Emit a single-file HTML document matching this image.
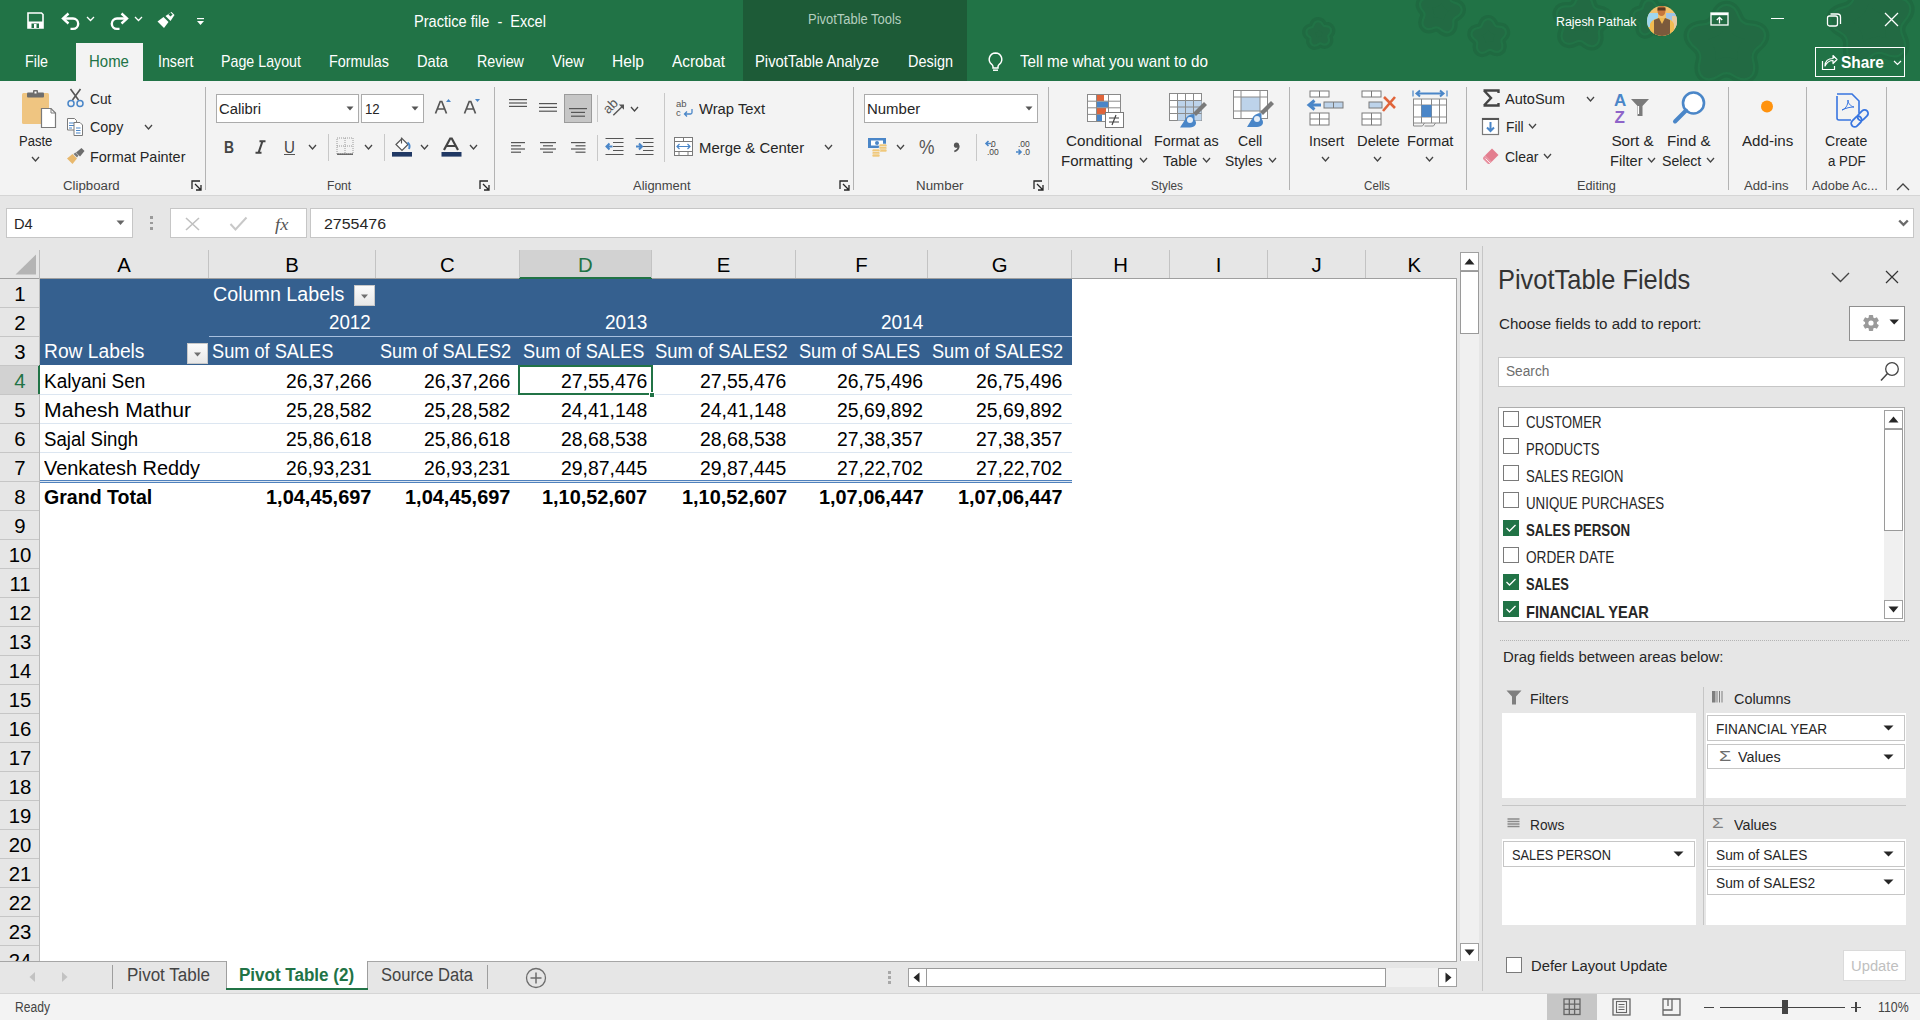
<!DOCTYPE html><html><head><meta charset="utf-8"><style>
html,body{margin:0;padding:0;}
body{width:1920px;height:1020px;position:relative;overflow:hidden;background:#ffffff;font-family:"Liberation Sans",sans-serif;}
.a{position:absolute;}
.t{position:absolute;white-space:pre;line-height:1;transform-origin:0 0;}
svg.a{overflow:visible;}
</style></head><body>
<div class="a" style="left:0px;top:0px;width:1920px;height:81px;background:#217346;"></div>
<div class="a" style="left:743px;top:0px;width:224px;height:81px;background:#1d5b37;"></div>
<svg class="a" style="left:1280px;top:0px;" width="640" height="81" viewBox="0 0 640 81"><clipPath id="ctb"><rect x="0" y="0" width="640" height="81"/></clipPath><g clip-path="url(#ctb)"><path d="M36.9 27.0 Q37.9 23.3 39.6 26.7 Q41.3 30.1 45.0 29.9 Q48.8 29.6 46.1 32.3 Q43.4 34.9 44.8 38.5 Q46.2 42.0 42.8 40.2 Q39.5 38.5 36.6 40.9 Q33.6 43.3 34.3 39.6 Q34.9 35.8 31.7 33.8 Q28.5 31.8 32.2 31.2 Q36.0 30.6 36.9 27.0Z" fill="#1f6a41" stroke="#1f6a41" stroke-width="16.2" stroke-linejoin="round"/><path d="M36.9 27.0 Q37.9 23.3 39.6 26.7 Q41.3 30.1 45.0 29.9 Q48.8 29.6 46.1 32.3 Q43.4 34.9 44.8 38.5 Q46.2 42.0 42.8 40.2 Q39.5 38.5 36.6 40.9 Q33.6 43.3 34.3 39.6 Q34.9 35.8 31.7 33.8 Q28.5 31.8 32.2 31.2 Q36.0 30.6 36.9 27.0Z" fill="#217346" stroke="#217346" stroke-width="9.8" stroke-linejoin="round"/><path d="M36.9 27.0 Q37.9 23.3 39.6 26.7 Q41.3 30.1 45.0 29.9 Q48.8 29.6 46.1 32.3 Q43.4 34.9 44.8 38.5 Q46.2 42.0 42.8 40.2 Q39.5 38.5 36.6 40.9 Q33.6 43.3 34.3 39.6 Q34.9 35.8 31.7 33.8 Q28.5 31.8 32.2 31.2 Q36.0 30.6 36.9 27.0Z" fill="#226a43" stroke="#226a43" stroke-width="5.4" stroke-linejoin="round"/><path d="M159.9 -1.5 Q163.5 -7.6 164.7 -0.7 Q166.0 6.2 172.8 7.7 Q179.7 9.2 173.5 12.6 Q167.4 15.9 168.0 22.9 Q168.7 29.9 163.6 25.0 Q158.6 20.2 152.1 23.0 Q145.7 25.8 148.7 19.5 Q151.7 13.2 147.1 7.9 Q142.4 2.7 149.4 3.6 Q156.3 4.5 159.9 -1.5Z" fill="#1f6a41" stroke="#1f6a41" stroke-width="19.1" stroke-linejoin="round"/><path d="M159.9 -1.5 Q163.5 -7.6 164.7 -0.7 Q166.0 6.2 172.8 7.7 Q179.7 9.2 173.5 12.6 Q167.4 15.9 168.0 22.9 Q168.7 29.9 163.6 25.0 Q158.6 20.2 152.1 23.0 Q145.7 25.8 148.7 19.5 Q151.7 13.2 147.1 7.9 Q142.4 2.7 149.4 3.6 Q156.3 4.5 159.9 -1.5Z" fill="#217346" stroke="#217346" stroke-width="12.7" stroke-linejoin="round"/><path d="M159.9 -1.5 Q163.5 -7.6 164.7 -0.7 Q166.0 6.2 172.8 7.7 Q179.7 9.2 173.5 12.6 Q167.4 15.9 168.0 22.9 Q168.7 29.9 163.6 25.0 Q158.6 20.2 152.1 23.0 Q145.7 25.8 148.7 19.5 Q151.7 13.2 147.1 7.9 Q142.4 2.7 149.4 3.6 Q156.3 4.5 159.9 -1.5Z" fill="#226a43" stroke="#226a43" stroke-width="8.3" stroke-linejoin="round"/><path d="M206.3 26.6 Q207.9 21.2 210.2 26.3 Q212.5 31.4 218.1 31.2 Q223.7 31.1 219.6 34.8 Q215.4 38.6 217.3 43.9 Q219.2 49.1 214.3 46.4 Q209.5 43.6 205.0 47.0 Q200.6 50.4 201.7 45.0 Q202.8 39.5 198.2 36.3 Q193.7 33.2 199.2 32.5 Q204.7 31.9 206.3 26.6Z" fill="#1f6a41" stroke="#1f6a41" stroke-width="17.8" stroke-linejoin="round"/><path d="M206.3 26.6 Q207.9 21.2 210.2 26.3 Q212.5 31.4 218.1 31.2 Q223.7 31.1 219.6 34.8 Q215.4 38.6 217.3 43.9 Q219.2 49.1 214.3 46.4 Q209.5 43.6 205.0 47.0 Q200.6 50.4 201.7 45.0 Q202.8 39.5 198.2 36.3 Q193.7 33.2 199.2 32.5 Q204.7 31.9 206.3 26.6Z" fill="#217346" stroke="#217346" stroke-width="11.4" stroke-linejoin="round"/><path d="M206.3 26.6 Q207.9 21.2 210.2 26.3 Q212.5 31.4 218.1 31.2 Q223.7 31.1 219.6 34.8 Q215.4 38.6 217.3 43.9 Q219.2 49.1 214.3 46.4 Q209.5 43.6 205.0 47.0 Q200.6 50.4 201.7 45.0 Q202.8 39.5 198.2 36.3 Q193.7 33.2 199.2 32.5 Q204.7 31.9 206.3 26.6Z" fill="#226a43" stroke="#226a43" stroke-width="7.0" stroke-linejoin="round"/><path d="M300.7 5.1 Q304.6 -2.8 306.8 5.7 Q309.0 14.2 317.7 15.5 Q326.4 16.8 319.0 21.5 Q311.6 26.3 313.0 34.9 Q314.5 43.6 307.7 38.0 Q300.9 32.4 293.1 36.5 Q285.3 40.5 288.5 32.4 Q291.7 24.2 285.5 18.0 Q279.2 11.8 288.0 12.4 Q296.8 12.9 300.7 5.1Z" fill="#1f6a41" stroke="#1f6a41" stroke-width="20.7" stroke-linejoin="round"/><path d="M300.7 5.1 Q304.6 -2.8 306.8 5.7 Q309.0 14.2 317.7 15.5 Q326.4 16.8 319.0 21.5 Q311.6 26.3 313.0 34.9 Q314.5 43.6 307.7 38.0 Q300.9 32.4 293.1 36.5 Q285.3 40.5 288.5 32.4 Q291.7 24.2 285.5 18.0 Q279.2 11.8 288.0 12.4 Q296.8 12.9 300.7 5.1Z" fill="#217346" stroke="#217346" stroke-width="14.3" stroke-linejoin="round"/><path d="M300.7 5.1 Q304.6 -2.8 306.8 5.7 Q309.0 14.2 317.7 15.5 Q326.4 16.8 319.0 21.5 Q311.6 26.3 313.0 34.9 Q314.5 43.6 307.7 38.0 Q300.9 32.4 293.1 36.5 Q285.3 40.5 288.5 32.4 Q291.7 24.2 285.5 18.0 Q279.2 11.8 288.0 12.4 Q296.8 12.9 300.7 5.1Z" fill="#226a43" stroke="#226a43" stroke-width="9.9" stroke-linejoin="round"/><path d="M367.6 7.8 Q368.8 2.3 371.5 7.2 Q374.1 12.1 379.7 11.6 Q385.2 11.1 381.4 15.1 Q377.5 19.2 379.8 24.3 Q382.0 29.4 377.0 27.0 Q371.9 24.6 367.7 28.3 Q363.6 32.0 364.3 26.4 Q365.0 20.9 360.2 18.1 Q355.4 15.3 360.9 14.2 Q366.4 13.2 367.6 7.8Z" fill="#1f6a41" stroke="#1f6a41" stroke-width="17.8" stroke-linejoin="round"/><path d="M367.6 7.8 Q368.8 2.3 371.5 7.2 Q374.1 12.1 379.7 11.6 Q385.2 11.1 381.4 15.1 Q377.5 19.2 379.8 24.3 Q382.0 29.4 377.0 27.0 Q371.9 24.6 367.7 28.3 Q363.6 32.0 364.3 26.4 Q365.0 20.9 360.2 18.1 Q355.4 15.3 360.9 14.2 Q366.4 13.2 367.6 7.8Z" fill="#217346" stroke="#217346" stroke-width="11.4" stroke-linejoin="round"/><path d="M367.6 7.8 Q368.8 2.3 371.5 7.2 Q374.1 12.1 379.7 11.6 Q385.2 11.1 381.4 15.1 Q377.5 19.2 379.8 24.3 Q382.0 29.4 377.0 27.0 Q371.9 24.6 367.7 28.3 Q363.6 32.0 364.3 26.4 Q365.0 20.9 360.2 18.1 Q355.4 15.3 360.9 14.2 Q366.4 13.2 367.6 7.8Z" fill="#226a43" stroke="#226a43" stroke-width="7.0" stroke-linejoin="round"/><path d="M441.8 19.4 Q446.5 6.8 451.2 19.4 Q455.9 32.0 469.4 32.6 Q482.8 33.2 472.3 41.6 Q461.7 50.0 465.3 62.9 Q468.9 75.9 457.7 68.5 Q446.5 61.0 435.3 68.5 Q424.1 75.9 427.7 62.9 Q431.3 50.0 420.7 41.6 Q410.2 33.2 423.6 32.6 Q437.1 32.0 441.8 19.4Z" fill="#1f6a41" stroke="#1f6a41" stroke-width="24.9" stroke-linejoin="round"/><path d="M441.8 19.4 Q446.5 6.8 451.2 19.4 Q455.9 32.0 469.4 32.6 Q482.8 33.2 472.3 41.6 Q461.7 50.0 465.3 62.9 Q468.9 75.9 457.7 68.5 Q446.5 61.0 435.3 68.5 Q424.1 75.9 427.7 62.9 Q431.3 50.0 420.7 41.6 Q410.2 33.2 423.6 32.6 Q437.1 32.0 441.8 19.4Z" fill="#217346" stroke="#217346" stroke-width="18.5" stroke-linejoin="round"/><path d="M441.8 19.4 Q446.5 6.8 451.2 19.4 Q455.9 32.0 469.4 32.6 Q482.8 33.2 472.3 41.6 Q461.7 50.0 465.3 62.9 Q468.9 75.9 457.7 68.5 Q446.5 61.0 435.3 68.5 Q424.1 75.9 427.7 62.9 Q431.3 50.0 420.7 41.6 Q410.2 33.2 423.6 32.6 Q437.1 32.0 441.8 19.4Z" fill="#226a43" stroke="#226a43" stroke-width="14.1" stroke-linejoin="round"/><path d="M582.4 -1.7 Q585.0 -15.6 592.2 -3.4 Q599.4 8.8 613.4 7.0 Q627.5 5.1 618.1 15.7 Q608.7 26.3 614.8 39.1 Q620.9 51.9 607.9 46.3 Q594.9 40.6 584.7 50.4 Q574.4 60.1 575.7 46.0 Q577.1 31.9 564.6 25.2 Q552.2 18.4 566.0 15.3 Q579.9 12.3 582.4 -1.7Z" fill="#1f6a41" stroke="#1f6a41" stroke-width="25.5" stroke-linejoin="round"/><path d="M582.4 -1.7 Q585.0 -15.6 592.2 -3.4 Q599.4 8.8 613.4 7.0 Q627.5 5.1 618.1 15.7 Q608.7 26.3 614.8 39.1 Q620.9 51.9 607.9 46.3 Q594.9 40.6 584.7 50.4 Q574.4 60.1 575.7 46.0 Q577.1 31.9 564.6 25.2 Q552.2 18.4 566.0 15.3 Q579.9 12.3 582.4 -1.7Z" fill="#217346" stroke="#217346" stroke-width="19.1" stroke-linejoin="round"/><path d="M582.4 -1.7 Q585.0 -15.6 592.2 -3.4 Q599.4 8.8 613.4 7.0 Q627.5 5.1 618.1 15.7 Q608.7 26.3 614.8 39.1 Q620.9 51.9 607.9 46.3 Q594.9 40.6 584.7 50.4 Q574.4 60.1 575.7 46.0 Q577.1 31.9 564.6 25.2 Q552.2 18.4 566.0 15.3 Q579.9 12.3 582.4 -1.7Z" fill="#226a43" stroke="#226a43" stroke-width="14.7" stroke-linejoin="round"/></g></svg>
<div class="a" style="left:76px;top:43px;width:67px;height:38px;background:#f3f3f3;"></div>
<svg class="a" style="left:27px;top:12px;" width="17" height="17" viewBox="0 0 17 17"><path d="M1 1h13.5l1.5 1.5V16H1z" fill="none" stroke="#fff" stroke-width="1.6"/><path d="M1 9.5h15V16H1z" fill="#fff"/><rect x="4.5" y="11.5" width="7.5" height="4.5" fill="#217346"/><rect x="7" y="12" width="2.5" height="4" fill="#fff"/></svg>
<svg class="a" style="left:60px;top:12px;" width="22" height="18" viewBox="0 0 22 18"><path d="M4 6.5h9a5.2 5.2 0 0 1 0 10.4h-2.5" fill="none" stroke="#fff" stroke-width="2.4"/><path d="M8.5 1.5L3 6.5l5.5 5" fill="none" stroke="#fff" stroke-width="2.4" stroke-linejoin="miter"/></svg>
<svg class="a" style="left:86px;top:15px;" width="10" height="8" viewBox="0 0 10 8"><path d="M1 2l3.5 3.5L8 2" fill="none" stroke="#fff" stroke-width="1.3"/></svg>
<svg class="a" style="left:108px;top:12px;" width="22" height="18" viewBox="0 0 22 18"><path d="M18 6.5H9a5.2 5.2 0 0 0 0 10.4h2.5" fill="none" stroke="#fff" stroke-width="2.4"/><path d="M13.5 1.5L19 6.5l-5.5 5" fill="none" stroke="#fff" stroke-width="2.4"/></svg>
<svg class="a" style="left:134px;top:15px;" width="10" height="8" viewBox="0 0 10 8"><path d="M1 2l3.5 3.5L8 2" fill="none" stroke="#fff" stroke-width="1.3"/></svg>
<svg class="a" style="left:156px;top:11px;" width="20" height="18" viewBox="0 0 20 18"><path d="M1.5 10.5l6-4.5 5 5-4.5 6z" fill="#fff"/><path d="M9.5 5l6-4 3 3-4 6z" fill="#fff"/><rect x="13" y="2" width="3" height="3" transform="rotate(45 14.5 3.5)" fill="#217346"/></svg>
<svg class="a" style="left:196px;top:17px;" width="10" height="10" viewBox="0 0 10 10"><rect x="1" y="1" width="7" height="1.2" fill="#fff"/><path d="M1 4h7l-3.5 4z" fill="#fff"/></svg>
<div class="t" style="left:414.00px;top:14.00px;font-size:15.99px;color:#ffffff;font-weight:normal;font-style:normal;transform:scaleX(0.9113);">Practice file  -  Excel</div>
<div class="t" style="left:808.00px;top:12.00px;font-size:14.53px;color:#b4cfbf;font-weight:normal;font-style:normal;transform:scaleX(0.8922);">PivotTable Tools</div>
<div class="t" style="left:1556.00px;top:15.00px;font-size:13.52px;color:#ffffff;font-weight:normal;font-style:normal;transform:scaleX(0.9137);">Rajesh Pathak</div>
<svg class="a" style="left:1647px;top:6px;" width="30" height="30" viewBox="0 0 30 30"><defs><clipPath id="av"><circle cx="15" cy="15" r="15"/></clipPath></defs><g clip-path="url(#av)"><rect width="30" height="30" fill="#f2c26c"/><rect x="0" y="7" width="11" height="14" fill="#9fd6ee"/><rect x="19" y="7" width="11" height="14" fill="#9ec4e6"/><rect x="25" y="10" width="5" height="18" fill="#e8c9a0"/><ellipse cx="14.5" cy="4.5" rx="4" ry="5.5" fill="#c7783c"/><path d="M10.5 1.5h8v3h-8z" fill="#5a3a22"/><path d="M3 30V18q2-5 9-6h6q7 1 9 6v12z" fill="#f1bb52"/><path d="M7 30V14l5-2 3 6 3-6 5 2v16z" fill="#7b5a3c"/></g></svg>
<svg class="a" style="left:1710px;top:12px;" width="19" height="14" viewBox="0 0 19 14"><rect x="1" y="1" width="17" height="12" fill="none" stroke="#fff" stroke-width="1.3"/><rect x="1" y="1" width="17" height="2.2" fill="#fff"/><path d="M9.5 11.5V5.5M6.8 8l2.7-2.7L12.2 8" fill="none" stroke="#fff" stroke-width="1.3"/></svg>
<div class="a" style="left:1771px;top:18px;width:13px;height:1px;background:#ffffff;"></div>
<svg class="a" style="left:1826px;top:12px;" width="16" height="15" viewBox="0 0 16 15"><rect x="1.5" y="4" width="10" height="10" rx="2" fill="none" stroke="#fff" stroke-width="1.3"/><path d="M4.5 2h7a3 3 0 0 1 3 3v7" fill="none" stroke="#fff" stroke-width="1.3"/></svg>
<svg class="a" style="left:1884px;top:12px;" width="15" height="15" viewBox="0 0 15 15"><path d="M1 1L14 14M14 1L1 14" stroke="#fff" stroke-width="1.3"/></svg>
<div class="t" style="left:25.00px;top:54.00px;font-size:15.99px;color:#ffffff;font-weight:normal;font-style:normal;transform:scaleX(0.8935);">File</div>
<div class="t" style="left:88.50px;top:54.00px;font-size:15.99px;color:#217346;font-weight:normal;font-style:normal;transform:scaleX(0.9370);">Home</div>
<div class="t" style="left:157.50px;top:54.00px;font-size:15.99px;color:#ffffff;font-weight:normal;font-style:normal;transform:scaleX(0.8881);">Insert</div>
<div class="t" style="left:221.00px;top:54.00px;font-size:15.99px;color:#ffffff;font-weight:normal;font-style:normal;transform:scaleX(0.8911);">Page Layout</div>
<div class="t" style="left:329.00px;top:54.00px;font-size:15.99px;color:#ffffff;font-weight:normal;font-style:normal;transform:scaleX(0.8999);">Formulas</div>
<div class="t" style="left:417.00px;top:54.00px;font-size:15.99px;color:#ffffff;font-weight:normal;font-style:normal;transform:scaleX(0.9167);">Data</div>
<div class="t" style="left:477.00px;top:54.00px;font-size:15.99px;color:#ffffff;font-weight:normal;font-style:normal;transform:scaleX(0.8962);">Review</div>
<div class="t" style="left:552.00px;top:54.00px;font-size:15.99px;color:#ffffff;font-weight:normal;font-style:normal;transform:scaleX(0.9309);">View</div>
<div class="t" style="left:612.00px;top:54.00px;font-size:15.99px;color:#ffffff;font-weight:normal;font-style:normal;transform:scaleX(0.9739);">Help</div>
<div class="t" style="left:672.00px;top:54.00px;font-size:15.99px;color:#ffffff;font-weight:normal;font-style:normal;transform:scaleX(0.9622);">Acrobat</div>
<div class="t" style="left:755.00px;top:54.00px;font-size:15.99px;color:#ffffff;font-weight:normal;font-style:normal;transform:scaleX(0.9238);">PivotTable Analyze</div>
<div class="t" style="left:907.50px;top:54.00px;font-size:15.99px;color:#ffffff;font-weight:normal;font-style:normal;transform:scaleX(0.9035);">Design</div>
<div class="t" style="left:1019.50px;top:54.00px;font-size:15.99px;color:#ffffff;font-weight:normal;font-style:normal;transform:scaleX(0.9529);">Tell me what you want to do</div>
<svg class="a" style="left:986px;top:51px;" width="19" height="21" viewBox="0 0 19 21"><path d="M9.5 2a6.3 6.3 0 0 0-3.8 11.3c.8.7 1.3 1.5 1.3 2.5V17h5v-1.2c0-1 .5-1.8 1.3-2.5A6.3 6.3 0 0 0 9.5 2z" fill="none" stroke="#fff" stroke-width="1.5"/><path d="M7 19.2h5" stroke="#fff" stroke-width="1.5"/></svg>
<div class="a" style="left:1815px;top:47px;width:90px;height:30px;box-sizing:border-box;border:1.3px solid #ffffff;"></div>
<svg class="a" style="left:1821px;top:52px;" width="16" height="19" viewBox="0 0 16 19"><path d="M1.5 9v8.5h12V14" fill="none" stroke="#fff" stroke-width="1.2"/><path d="M4 14c0-5 3-7.5 8-7.5V3.5l4 4-4 4V8.5c-3.5 0-6 1.5-8 5.5z" fill="none" stroke="#fff" stroke-width="1.2" stroke-linejoin="round"/></svg>
<div class="t" style="left:1841.00px;top:55.00px;font-size:16.72px;color:#ffffff;font-weight:bold;font-style:normal;transform:scaleX(0.9254);">Share</div>
<svg class="a" style="left:1893px;top:60px;" width="9" height="6" viewBox="0 0 9 6"><path d="M1 1l3.5 3.5L8 1" fill="none" stroke="#fff" stroke-width="1.2"/></svg>
<div class="a" style="left:0px;top:81px;width:1920px;height:114px;background:#f3f3f3;"></div>
<div class="a" style="left:0px;top:195px;width:1920px;height:1px;background:#d5d5d5;"></div>
<div class="a" style="left:205px;top:87px;width:1px;height:103px;background:#b3b3b3;"></div>
<div class="a" style="left:493.5px;top:87px;width:1.0px;height:103px;background:#b3b3b3;"></div>
<div class="a" style="left:853px;top:87px;width:1px;height:103px;background:#b3b3b3;"></div>
<div class="a" style="left:1047.5px;top:87px;width:1.0px;height:103px;background:#b3b3b3;"></div>
<div class="a" style="left:1289px;top:87px;width:1px;height:103px;background:#b3b3b3;"></div>
<div class="a" style="left:1466px;top:87px;width:1px;height:103px;background:#b3b3b3;"></div>
<div class="a" style="left:1728px;top:87px;width:1px;height:103px;background:#b3b3b3;"></div>
<div class="a" style="left:1806px;top:87px;width:1px;height:103px;background:#b3b3b3;"></div>
<div class="a" style="left:1886px;top:87px;width:1px;height:103px;background:#b3b3b3;"></div>
<svg class="a" style="left:191px;top:180px;" width="11" height="11" viewBox="0 0 11 11"><path d="M1 9V1h8" fill="none" stroke="#262626" stroke-width="1.3"/><path d="M4 4l5.5 5.5M10 5v5H5" fill="none" stroke="#262626" stroke-width="1.3"/></svg>
<svg class="a" style="left:479px;top:180px;" width="11" height="11" viewBox="0 0 11 11"><path d="M1 9V1h8" fill="none" stroke="#262626" stroke-width="1.3"/><path d="M4 4l5.5 5.5M10 5v5H5" fill="none" stroke="#262626" stroke-width="1.3"/></svg>
<svg class="a" style="left:838.5px;top:180px;" width="11" height="11" viewBox="0 0 11 11"><path d="M1 9V1h8" fill="none" stroke="#262626" stroke-width="1.3"/><path d="M4 4l5.5 5.5M10 5v5H5" fill="none" stroke="#262626" stroke-width="1.3"/></svg>
<svg class="a" style="left:1033px;top:180px;" width="11" height="11" viewBox="0 0 11 11"><path d="M1 9V1h8" fill="none" stroke="#262626" stroke-width="1.3"/><path d="M4 4l5.5 5.5M10 5v5H5" fill="none" stroke="#262626" stroke-width="1.3"/></svg>
<div class="t" style="left:62.70px;top:179.00px;font-size:13.08px;color:#444444;font-weight:normal;font-style:normal;transform:scaleX(1.0127);">Clipboard</div>
<div class="t" style="left:326.60px;top:179.00px;font-size:13.08px;color:#444444;font-weight:normal;font-style:normal;transform:scaleX(0.9250);">Font</div>
<div class="t" style="left:633.20px;top:179.00px;font-size:13.08px;color:#444444;font-weight:normal;font-style:normal;transform:scaleX(0.9906);">Alignment</div>
<div class="t" style="left:915.50px;top:179.00px;font-size:13.08px;color:#444444;font-weight:normal;font-style:normal;transform:scaleX(1.0214);">Number</div>
<div class="t" style="left:1151.30px;top:179.00px;font-size:13.08px;color:#444444;font-weight:normal;font-style:normal;transform:scaleX(0.8977);">Styles</div>
<div class="t" style="left:1363.60px;top:179.00px;font-size:13.08px;color:#444444;font-weight:normal;font-style:normal;transform:scaleX(0.8898);">Cells</div>
<div class="t" style="left:1576.70px;top:179.00px;font-size:13.08px;color:#444444;font-weight:normal;font-style:normal;transform:scaleX(0.9743);">Editing</div>
<div class="t" style="left:1744.00px;top:179.00px;font-size:13.08px;color:#444444;font-weight:normal;font-style:normal;transform:scaleX(1.0057);">Add-ins</div>
<div class="t" style="left:1812.40px;top:179.00px;font-size:13.08px;color:#444444;font-weight:normal;font-style:normal;transform:scaleX(0.9834);">Adobe Ac...</div>
<svg class="a" style="left:1896px;top:183px;" width="14" height="8" viewBox="0 0 14 8"><path d="M1 7l6-6 6 6" fill="none" stroke="#444" stroke-width="1.3"/></svg>
<svg class="a" style="left:20px;top:88px;" width="38" height="42" viewBox="0 0 38 42"><rect x="2" y="5" width="27" height="31" rx="1.5" fill="#efc581"/><rect x="7" y="4.5" width="17" height="5" rx="1" fill="#6d6d6d"/><rect x="13" y="2" width="5" height="4" rx="1" fill="#6d6d6d"/><rect x="14.5" y="3.5" width="2" height="2" fill="#fff"/><path d="M21.5 20.5h9.5l4.5 4.5v14.5h-14z" fill="#fff" stroke="#7a7a7a" stroke-width="1.2"/><path d="M31 20.5v4.5h4.5" fill="none" stroke="#7a7a7a" stroke-width="1"/></svg>
<div class="t" style="left:19.40px;top:134.00px;font-size:14.83px;color:#262626;font-weight:normal;font-style:normal;transform:scaleX(0.8791);">Paste</div>
<svg class="a" style="left:31px;top:156px;" width="9" height="6" viewBox="0 0 9 6"><path d="M1 1l3.5 4l3.5 -4" fill="none" stroke="#444" stroke-width="1.3"/></svg>
<svg class="a" style="left:66px;top:88px;" width="19" height="20" viewBox="0 0 19 20"><path d="M4.5 1l8 11M14.5 1l-8 11" stroke="#555" stroke-width="1.6"/><circle cx="5" cy="15.5" r="3" fill="none" stroke="#4a86c8" stroke-width="1.5"/><circle cx="14" cy="15.5" r="3" fill="none" stroke="#4a86c8" stroke-width="1.5"/></svg>
<div class="t" style="left:90.40px;top:92.00px;font-size:14.97px;color:#262626;font-weight:normal;font-style:normal;transform:scaleX(0.9193);">Cut</div>
<svg class="a" style="left:66px;top:117px;" width="19" height="20" viewBox="0 0 19 20"><path d="M1.5 1.5h7l2 2V13h-9z" fill="#fff" stroke="#7a7a7a" stroke-width="1"/><path d="M3 6h5M3 8.5h5M3 11h3" stroke="#4a86c8" stroke-width="1"/><path d="M8 5.5h6l2.5 2.5v10.5H8z" fill="#fff" stroke="#7a7a7a" stroke-width="1"/><path d="M10 11h4.5M10 13.5h4.5M10 16h4.5" stroke="#4a86c8" stroke-width="1.1"/></svg>
<div class="t" style="left:90.40px;top:120.00px;font-size:14.97px;color:#262626;font-weight:normal;font-style:normal;transform:scaleX(0.9555);">Copy</div>
<svg class="a" style="left:144px;top:124px;" width="9" height="6" viewBox="0 0 9 6"><path d="M1 1l3.5 4l3.5 -4" fill="none" stroke="#444" stroke-width="1.3"/></svg>
<svg class="a" style="left:66px;top:147px;" width="20" height="18" viewBox="0 0 20 18"><path d="M1 11.5l5.5-4.5 4.5 4.5-4.5 5.5z" fill="#e8b86d"/><path d="M7.5 7l2-1.5 3 3-1.5 2z" fill="#7a7a7a"/><path d="M10 5.5l5.5-4.5 3 3-4.5 5.5z" fill="#6d6d6d"/></svg>
<div class="t" style="left:90.40px;top:150.00px;font-size:14.97px;color:#262626;font-weight:normal;font-style:normal;transform:scaleX(0.9643);">Format Painter</div>
<div class="a" style="left:216px;top:94px;width:143px;height:29px;background:#ffffff;box-sizing:border-box;border:1px solid #ababab;"></div>
<div class="t" style="left:219.00px;top:101.00px;font-size:15.26px;color:#262626;font-weight:normal;font-style:normal;transform:scaleX(0.9707);">Calibri</div>
<svg class="a" style="left:346px;top:106px;" width="8" height="5" viewBox="0 0 8 5"><path d="M0.5 0.5h7L4 4.5z" fill="#555"/></svg>
<div class="a" style="left:361px;top:94px;width:63px;height:29px;background:#ffffff;box-sizing:border-box;border:1px solid #ababab;"></div>
<div class="t" style="left:365.00px;top:101.00px;font-size:15.26px;color:#262626;font-weight:normal;font-style:normal;transform:scaleX(0.8677);">12</div>
<svg class="a" style="left:411px;top:106px;" width="8" height="5" viewBox="0 0 8 5"><path d="M0.5 0.5h7L4 4.5z" fill="#555"/></svg>
<svg class="a" style="left:434px;top:98px;" width="18" height="18" viewBox="0 0 18 18"><path d="M1.5 15.5L6.2 3.5h1.6l4.7 12M3.5 11h7" fill="none" stroke="#555" stroke-width="1.7"/><path d="M12 4l2.5-3 2.5 3z" fill="#4a86c8"/></svg>
<svg class="a" style="left:463px;top:98px;" width="18" height="18" viewBox="0 0 18 18"><path d="M1.5 15.5L6.2 3.5h1.6l4.7 12M3.5 11h7" fill="none" stroke="#555" stroke-width="1.7"/><path d="M12 1h5l-2.5 3z" fill="#4a86c8"/></svg>
<div class="t" style="left:224.00px;top:140.00px;font-size:15.99px;color:#444;font-weight:bold;font-style:normal;transform:scaleX(0.8687);">B</div>
<svg class="a" style="left:255px;top:140px;" width="11" height="14" viewBox="0 0 11 14"><path d="M4.5 1.2h6M0.5 12.8h6M7.5 1.2L3.5 12.8" fill="none" stroke="#444" stroke-width="2"/></svg>
<div class="t" style="left:283.60px;top:140.00px;font-size:15.99px;color:#444;font-weight:normal;font-style:normal;transform:scaleX(0.9469);">U</div>
<div class="a" style="left:283.6px;top:154px;width:11.399999999999977px;height:1.3000000000000114px;background:#555;"></div>
<svg class="a" style="left:307.6px;top:144px;" width="9" height="6" viewBox="0 0 9 6"><path d="M1 1l3.5 4l3.5 -4" fill="none" stroke="#444" stroke-width="1.3"/></svg>
<div class="a" style="left:327.5px;top:134px;width:1.0px;height:26.5px;background:#c8c8c8;"></div>
<svg class="a" style="left:336px;top:137px;" width="19" height="19" viewBox="0 0 19 19"><rect x="1" y="1" width="16" height="16" fill="none" stroke="#9a9a9a" stroke-width="1" stroke-dasharray="1 1"/><path d="M9 1v16M1 9h16" stroke="#9a9a9a" stroke-width="1" stroke-dasharray="1 1"/><path d="M1 17.2h16" stroke="#555" stroke-width="1.3"/></svg>
<svg class="a" style="left:364px;top:144px;" width="9" height="6" viewBox="0 0 9 6"><path d="M1 1l3.5 4l3.5 -4" fill="none" stroke="#444" stroke-width="1.3"/></svg>
<div class="a" style="left:383.5px;top:134px;width:1.0px;height:26.5px;background:#c8c8c8;"></div>
<svg class="a" style="left:391px;top:136px;" width="22" height="22" viewBox="0 0 22 22"><path d="M5 8.5l6-6 6 6-6 6z" fill="#fff" stroke="#555" stroke-width="1.2"/><path d="M10.5 1.5v6" stroke="#555" stroke-width="1.2"/><path d="M16.5 6.5c2 1.5 2.5 4 1.5 6.5" fill="none" stroke="#4a86c8" stroke-width="2"/><rect x="1" y="16" width="20" height="4.6" fill="#203864"/></svg>
<svg class="a" style="left:420px;top:144px;" width="9" height="6" viewBox="0 0 9 6"><path d="M1 1l3.5 4l3.5 -4" fill="none" stroke="#444" stroke-width="1.3"/></svg>
<svg class="a" style="left:441px;top:137px;" width="21" height="20" viewBox="0 0 21 20"><path d="M3 13L9.2 1.5h1.6L17 13M5.5 9h9" fill="none" stroke="#444" stroke-width="2.2"/><rect x="0.5" y="15" width="20" height="4.6" fill="#203864"/></svg>
<svg class="a" style="left:468.5px;top:144px;" width="9" height="6" viewBox="0 0 9 6"><path d="M1 1l3.5 4l3.5 -4" fill="none" stroke="#444" stroke-width="1.3"/></svg>
<svg class="a" style="left:509px;top:98.5px;" width="30" height="30" viewBox="0 0 30 30"><rect x="0" y="0.0" width="18" height="1.2" fill="#555"/><rect x="0" y="3.4" width="18" height="1.2" fill="#555"/><rect x="0" y="6.8" width="18" height="1.2" fill="#555"/></svg>
<div class="a" style="left:564px;top:94px;width:28px;height:29px;background:#c6c6c6;box-sizing:border-box;border:1px solid #9b9b9b;"></div>
<svg class="a" style="left:539px;top:103px;" width="30" height="30" viewBox="0 0 30 30"><rect x="0" y="0.0" width="18" height="1.2" fill="#555"/><rect x="0" y="3.8" width="18" height="1.2" fill="#555"/><rect x="0" y="7.6" width="18" height="1.2" fill="#555"/></svg>
<svg class="a" style="left:569px;top:107.5px;" width="30" height="30" viewBox="0 0 30 30"><rect x="0" y="0.0" width="18" height="1.2" fill="#555"/><rect x="2" y="3.8" width="14" height="1.2" fill="#555"/><rect x="2" y="7.6" width="14" height="1.2" fill="#555"/></svg>
<div class="a" style="left:596.5px;top:95px;width:1.0px;height:27px;background:#c8c8c8;"></div>
<svg class="a" style="left:595px;top:90px;" width="35" height="30" viewBox="0 0 35 30"><text x="0" y="0" font-size="13.5" fill="#5a5a5a" font-family="Liberation Sans" transform="translate(13.2 24.5) rotate(-45)">ab</text><path d="M18.3 25.3L27.5 16.2" stroke="#555" stroke-width="1.4"/><path d="M29 14.6h-5.2l5.2 5.2z" fill="#555"/></svg>
<svg class="a" style="left:630px;top:105.5px;" width="9" height="6" viewBox="0 0 9 6"><path d="M1 1l3.5 4l3.5 -4" fill="none" stroke="#444" stroke-width="1.3"/></svg>
<div class="a" style="left:664px;top:93px;width:1px;height:69px;background:#c8c8c8;"></div>
<svg class="a" style="left:676px;top:99px;" width="18" height="19" viewBox="0 0 18 19"><text x="0" y="8" font-size="9.5" fill="#555" font-family="Liberation Sans">ab</text><text x="0" y="17" font-size="9.5" fill="#555" font-family="Liberation Sans">c</text><path d="M16 10v3.5a1.5 1.5 0 0 1-1.5 1.5H8.5M11 12.5L8.5 15l2.5 2.5" fill="none" stroke="#4a86c8" stroke-width="1.3"/></svg>
<div class="t" style="left:698.50px;top:101.00px;font-size:15.26px;color:#262626;font-weight:normal;font-style:normal;transform:scaleX(0.9700);">Wrap Text</div>
<svg class="a" style="left:511px;top:142px;" width="30" height="30" viewBox="0 0 30 30"><rect x="0" y="0.0" width="14" height="1.2" fill="#555"/><rect x="0" y="3.2" width="10" height="1.2" fill="#555"/><rect x="0" y="6.4" width="14" height="1.2" fill="#555"/><rect x="0" y="9.600000000000001" width="10" height="1.2" fill="#555"/></svg>
<svg class="a" style="left:540px;top:142px;" width="30" height="30" viewBox="0 0 30 30"><rect x="0" y="0.0" width="16" height="1.2" fill="#555"/><rect x="3" y="3.2" width="10" height="1.2" fill="#555"/><rect x="0" y="6.4" width="16" height="1.2" fill="#555"/><rect x="3" y="9.600000000000001" width="10" height="1.2" fill="#555"/></svg>
<svg class="a" style="left:570.5px;top:142px;" width="30" height="30" viewBox="0 0 30 30"><rect x="0" y="0.0" width="14.5" height="1.2" fill="#555"/><rect x="4.5" y="3.2" width="10" height="1.2" fill="#555"/><rect x="0" y="6.4" width="14.5" height="1.2" fill="#555"/><rect x="4.5" y="9.600000000000001" width="10" height="1.2" fill="#555"/></svg>
<div class="a" style="left:596.5px;top:134.5px;width:1.0px;height:26.0px;background:#c8c8c8;"></div>
<svg class="a" style="left:605px;top:138px;" width="20" height="18" viewBox="0 0 20 18"><path d="M0.5 0.5h18M8 4.5h10.5M8 8.5h10.5M8 12.5h10.5M0.5 16.5h18" stroke="#555" stroke-width="1.1"/><path d="M1.5 8.5h6M4.5 5.5l-3 3 3 3" fill="none" stroke="#4a86c8" stroke-width="2"/></svg>
<svg class="a" style="left:635px;top:138px;" width="20" height="18" viewBox="0 0 20 18"><path d="M0.5 0.5h18M8 4.5h10.5M8 8.5h10.5M8 12.5h10.5M0.5 16.5h18" stroke="#555" stroke-width="1.1"/><path d="M1 8.5h6M4 5.5l3 3-3 3" fill="none" stroke="#4a86c8" stroke-width="2"/></svg>
<svg class="a" style="left:673px;top:136px;" width="21" height="21" viewBox="0 0 21 21"><rect x="1.5" y="1.5" width="18" height="18" fill="#fff" stroke="#7a7a7a" stroke-width="1"/><path d="M1.5 5.5h18M1.5 15.5h18M10.5 1.5v4M6 15.5v4M15 15.5v4" stroke="#7a7a7a" stroke-width="1"/><path d="M4 10.5h13M6.5 8l-2.5 2.5 2.5 2.5M14.5 8l2.5 2.5-2.5 2.5" fill="none" stroke="#4a86c8" stroke-width="1.2"/></svg>
<div class="t" style="left:698.50px;top:140.00px;font-size:15.26px;color:#262626;font-weight:normal;font-style:normal;transform:scaleX(0.9764);">Merge &amp; Center</div>
<svg class="a" style="left:824px;top:143.5px;" width="9" height="6" viewBox="0 0 9 6"><path d="M1 1l3.5 4l3.5 -4" fill="none" stroke="#444" stroke-width="1.3"/></svg>
<div class="a" style="left:864px;top:94px;width:174px;height:29px;background:#ffffff;box-sizing:border-box;border:1px solid #ababab;"></div>
<div class="t" style="left:867.40px;top:101.00px;font-size:15.26px;color:#262626;font-weight:normal;font-style:normal;transform:scaleX(0.9806);">Number</div>
<svg class="a" style="left:1025px;top:106px;" width="8" height="5" viewBox="0 0 8 5"><path d="M0.5 0.5h7L4 4.5z" fill="#555"/></svg>
<svg class="a" style="left:867px;top:137px;" width="22" height="21" viewBox="0 0 22 21"><rect x="1" y="1" width="18" height="10" fill="#4a86c8"/><rect x="4" y="3.5" width="12" height="5" fill="#fff"/><circle cx="10" cy="6" r="2" fill="#4a86c8"/><g fill="#f0c87a" stroke="#f3f3f3" stroke-width="0.6"><rect x="12" y="7" width="8" height="3" rx="1.5"/><rect x="12" y="9.5" width="8" height="3" rx="1.5"/><rect x="12" y="12" width="8" height="3" rx="1.5"/><rect x="5" y="12" width="8" height="3" rx="1.5"/><rect x="5" y="14.5" width="8" height="3" rx="1.5"/><rect x="5" y="17" width="8" height="3" rx="1.5"/></g></svg>
<svg class="a" style="left:895.8px;top:144.3px;" width="9" height="6" viewBox="0 0 9 6"><path d="M1 1l3.5 4l3.5 -4" fill="none" stroke="#444" stroke-width="1.3"/></svg>
<div class="t" style="left:919.00px;top:137.00px;font-size:20.35px;color:#555;font-weight:normal;font-style:normal;transform:scaleX(0.8559);">%</div>
<svg class="a" style="left:952px;top:142px;" width="9" height="10" viewBox="0 0 9 10"><circle cx="4.5" cy="3.2" r="2.6" fill="#555"/><path d="M6.8 3.5c0 3-1.5 5-4.5 6" fill="none" stroke="#555" stroke-width="1.8"/></svg>
<div class="a" style="left:975.5px;top:134px;width:1.0px;height:27px;background:#c8c8c8;"></div>
<svg class="a" style="left:985px;top:139px;" width="18" height="17" viewBox="0 0 18 17"><text x="6" y="8" font-size="8.5" fill="#444" font-family="Liberation Sans">0</text><text x="2" y="16" font-size="8.5" fill="#444" font-family="Liberation Sans">.00</text><path d="M1 4.5h5M3.5 2L1 4.5 3.5 7" fill="none" stroke="#4a86c8" stroke-width="1.6"/><circle cx="6.5" cy="7.5" r="0.6" fill="#444"/></svg>
<svg class="a" style="left:1015px;top:139px;" width="18" height="17" viewBox="0 0 18 17"><text x="3" y="8" font-size="8.5" fill="#444" font-family="Liberation Sans">.00</text><text x="8" y="16" font-size="8.5" fill="#444" font-family="Liberation Sans">.0</text><path d="M1 13h5M3.5 10.5L6 13 3.5 15.5" fill="none" stroke="#4a86c8" stroke-width="1.6"/></svg>
<svg class="a" style="left:1086px;top:93px;" width="40" height="36" viewBox="0 0 40 36"><g stroke="#8a8a8a" stroke-width="1" fill="#fff"><rect x="1.5" y="1.5" width="33" height="27"/></g><rect x="11" y="2" width="7" height="6" fill="#e0643a"/><rect x="11" y="8.5" width="11" height="6" fill="#4a86c8"/><rect x="11" y="15" width="9" height="6" fill="#e0643a"/><rect x="11" y="21.5" width="5" height="6.5" fill="#4a86c8"/><g stroke="#8a8a8a" stroke-width="1"><path d="M1.5 8.2h33M1.5 14.8h33M1.5 21.4h33M10.5 1.5v27M22.5 1.5v27"/></g><rect x="19.5" y="19.5" width="18" height="15" fill="#fff" stroke="#7a7a7a" stroke-width="1"/><path d="M23 25h10M23 29h10M30 22l-4 10" stroke="#444" stroke-width="1.2"/></svg>
<div class="t" style="left:1066.00px;top:133.00px;font-size:15.26px;color:#262626;font-weight:normal;font-style:normal;transform:scaleX(0.9976);">Conditional</div>
<div class="t" style="left:1061.40px;top:153.00px;font-size:15.26px;color:#262626;font-weight:normal;font-style:normal;transform:scaleX(0.9870);">Formatting</div>
<svg class="a" style="left:1138.5px;top:156.5px;" width="9" height="6" viewBox="0 0 9 6"><path d="M1 1l3.5 4l3.5 -4" fill="none" stroke="#444" stroke-width="1.3"/></svg>
<svg class="a" style="left:1168px;top:92px;" width="40" height="37" viewBox="0 0 40 37"><rect x="1.5" y="1.5" width="32" height="27" fill="#fff" stroke="#8a8a8a"/><rect x="9.5" y="9" width="24" height="19.5" fill="#bdd3ea"/><g stroke="#8a8a8a" stroke-width="1"><path d="M1.5 8.5h32M1.5 15h32M1.5 21.5h32M9.5 1.5v27M17.5 1.5v27M25.5 1.5v27"/></g><path d="M36 10l3 3-11 11-3-3z" fill="#7a7a7a"/><path d="M26.5 22.5c-4-1-8 2-9 4.5l-5.5 8.5h10c5 0 8-4 4.5-8z" fill="#4a86c8"/><circle cx="22" cy="28" r="3" fill="#fff" opacity="0.85"/></svg>
<div class="t" style="left:1154.40px;top:133.00px;font-size:15.26px;color:#262626;font-weight:normal;font-style:normal;transform:scaleX(0.9406);">Format as</div>
<div class="t" style="left:1162.50px;top:153.00px;font-size:15.26px;color:#262626;font-weight:normal;font-style:normal;transform:scaleX(0.9404);">Table</div>
<svg class="a" style="left:1201.5px;top:156.5px;" width="9" height="6" viewBox="0 0 9 6"><path d="M1 1l3.5 4l3.5 -4" fill="none" stroke="#444" stroke-width="1.3"/></svg>
<svg class="a" style="left:1232px;top:89px;" width="42" height="40" viewBox="0 0 42 40"><rect x="1.5" y="1.5" width="34" height="28" fill="#fff" stroke="#8a8a8a"/><rect x="9" y="8" width="19" height="14" fill="#bdd3ea"/><g stroke="#8a8a8a"><path d="M1.5 8h34M1.5 22h34M9 1.5v28M28 1.5v28"/></g><path d="M39 12l3 3-11 11-3-3z" fill="#7a7a7a"/><path d="M29.5 24.5c-4-1-8 2-9 4.5l-5.5 9h10c5 0 8-4 4.5-8.5z" fill="#4a86c8"/><circle cx="25" cy="30" r="3" fill="#fff" opacity="0.85"/></svg>
<div class="t" style="left:1238.00px;top:133.00px;font-size:15.26px;color:#262626;font-weight:normal;font-style:normal;transform:scaleX(0.9230);">Cell</div>
<div class="t" style="left:1225.20px;top:153.00px;font-size:15.26px;color:#262626;font-weight:normal;font-style:normal;transform:scaleX(0.9017);">Styles</div>
<svg class="a" style="left:1267.6px;top:156.5px;" width="9" height="6" viewBox="0 0 9 6"><path d="M1 1l3.5 4l3.5 -4" fill="none" stroke="#444" stroke-width="1.3"/></svg>
<svg class="a" style="left:1306px;top:90px;" width="38" height="37" viewBox="0 0 38 37"><g fill="#fff" stroke="#7a7a7a" stroke-width="1"><rect x="4" y="1" width="19" height="6"/><path d="M13.5 1v6"/><rect x="4" y="23" width="19" height="12"/><path d="M13.5 23v12M4 29h19"/></g><rect x="18" y="12" width="19" height="6" fill="#bdd3ea" stroke="#7a7a7a"/><path d="M27.5 12v6" stroke="#7a7a7a"/><path d="M15 15H5M8.5 10.5L3 15l5.5 4.5" fill="none" stroke="#4a86c8" stroke-width="3"/></svg>
<div class="t" style="left:1308.50px;top:133.00px;font-size:15.26px;color:#262626;font-weight:normal;font-style:normal;transform:scaleX(0.9252);">Insert</div>
<svg class="a" style="left:1321px;top:156px;" width="9" height="6" viewBox="0 0 9 6"><path d="M1 1l3.5 4l3.5 -4" fill="none" stroke="#444" stroke-width="1.3"/></svg>
<svg class="a" style="left:1361px;top:90px;" width="38" height="37" viewBox="0 0 38 37"><g fill="#fff" stroke="#7a7a7a" stroke-width="1"><rect x="1" y="1" width="19" height="6"/><path d="M10.5 1v6"/><rect x="1" y="23" width="19" height="12"/><path d="M10.5 23v12M1 29h19"/></g><rect x="8" y="12" width="13" height="6" fill="#bdd3ea" stroke="#7a7a7a"/><path d="M23 7l11 11M34 7L22 21" stroke="#e0643a" stroke-width="2.6"/></svg>
<div class="t" style="left:1356.80px;top:133.00px;font-size:15.26px;color:#262626;font-weight:normal;font-style:normal;transform:scaleX(0.9659);">Delete</div>
<svg class="a" style="left:1372.8px;top:156px;" width="9" height="6" viewBox="0 0 9 6"><path d="M1 1l3.5 4l3.5 -4" fill="none" stroke="#444" stroke-width="1.3"/></svg>
<svg class="a" style="left:1412px;top:89px;" width="37" height="39" viewBox="0 0 37 39"><path d="M1 1.5v6M35 1.5v6" stroke="#4a86c8" stroke-width="1.2"/><path d="M4 4.5h28M8 1.5L4.5 4.5 8 7.5M28 1.5l3.5 3-3.5 3" fill="none" stroke="#4a86c8" stroke-width="2"/><rect x="1.5" y="10" width="33" height="24" fill="#fff" stroke="#8a8a8a"/><g stroke="#8a8a8a"><path d="M1.5 16h33M1.5 28h33M9.5 10v24M19.5 10v24M27.5 10v24"/></g><rect x="9.5" y="16" width="10" height="12" fill="#4a86c8"/><path d="M1.5 34v3h9l2-3M12.5 37h9l2-3" fill="none" stroke="#8a8a8a"/></svg>
<div class="t" style="left:1407.40px;top:133.00px;font-size:15.26px;color:#262626;font-weight:normal;font-style:normal;transform:scaleX(0.9606);">Format</div>
<svg class="a" style="left:1425px;top:156px;" width="9" height="6" viewBox="0 0 9 6"><path d="M1 1l3.5 4l3.5 -4" fill="none" stroke="#444" stroke-width="1.3"/></svg>
<svg class="a" style="left:1482px;top:89px;" width="18" height="18" viewBox="0 0 18 18"><path d="M1.5 1.5h15v2.5M2 1.5l7 7.5-7 7.5M1.5 16.5h15V14" fill="none" stroke="#444" stroke-width="2.4"/></svg>
<div class="t" style="left:1505.40px;top:91.00px;font-size:15.26px;color:#262626;font-weight:normal;font-style:normal;transform:scaleX(0.9538);">AutoSum</div>
<svg class="a" style="left:1585.6px;top:95.5px;" width="9" height="6" viewBox="0 0 9 6"><path d="M1 1l3.5 4l3.5 -4" fill="none" stroke="#444" stroke-width="1.3"/></svg>
<svg class="a" style="left:1481px;top:117px;" width="19" height="19" viewBox="0 0 19 19"><rect x="1.5" y="1.5" width="16" height="16" fill="#fff" stroke="#7a7a7a" stroke-width="1.2"/><rect x="1" y="1" width="17" height="2" fill="#555"/><path d="M9.5 5v9M6 10.5l3.5 3.5 3.5-3.5" fill="none" stroke="#4a86c8" stroke-width="2"/></svg>
<div class="t" style="left:1505.60px;top:119.00px;font-size:15.26px;color:#262626;font-weight:normal;font-style:normal;transform:scaleX(0.9045);">Fill</div>
<svg class="a" style="left:1528px;top:123px;" width="9" height="6" viewBox="0 0 9 6"><path d="M1 1l3.5 4l3.5 -4" fill="none" stroke="#444" stroke-width="1.3"/></svg>
<svg class="a" style="left:1482px;top:147px;" width="18" height="18" viewBox="0 0 18 18"><path d="M10 1.5l6.5 6.5-7 7-6.5-6.5z" fill="#e37e8f"/><path d="M3 8.5l6.5 6.5-2 2h-1.5l-5-5v-1.5z" fill="#e8909f"/><path d="M3.5 11.5l5 5" stroke="#fff" stroke-width="0.8"/></svg>
<div class="t" style="left:1505.40px;top:149.00px;font-size:15.26px;color:#262626;font-weight:normal;font-style:normal;transform:scaleX(0.9157);">Clear</div>
<svg class="a" style="left:1543.2px;top:152.5px;" width="9" height="6" viewBox="0 0 9 6"><path d="M1 1l3.5 4l3.5 -4" fill="none" stroke="#444" stroke-width="1.3"/></svg>
<svg class="a" style="left:1614px;top:91px;" width="38" height="34" viewBox="0 0 38 34"><text x="0" y="14.5" font-size="17" fill="#4a86c8" font-family="Liberation Sans" font-weight="bold">A</text><text x="0.5" y="32" font-size="17" fill="#8e64c9" font-family="Liberation Sans" font-weight="bold">Z</text><path d="M17 8h18l-6.5 7v10h-5v-10z" fill="#7a7a7a"/><path d="M24.5 15v8" stroke="#fff" stroke-width="1.2"/></svg>
<div class="t" style="left:1611.40px;top:133.00px;font-size:15.26px;color:#262626;font-weight:normal;font-style:normal;">Sort &amp;</div>
<div class="t" style="left:1609.60px;top:153.00px;font-size:15.26px;color:#262626;font-weight:normal;font-style:normal;transform:scaleX(0.9592);">Filter</div>
<svg class="a" style="left:1646.5px;top:156.5px;" width="9" height="6" viewBox="0 0 9 6"><path d="M1 1l3.5 4l3.5 -4" fill="none" stroke="#444" stroke-width="1.3"/></svg>
<svg class="a" style="left:1670px;top:90px;" width="36" height="37" viewBox="0 0 36 37"><circle cx="23.5" cy="13" r="10.5" fill="#fff" stroke="#4a86c8" stroke-width="2.6"/><path d="M16 20.5L5 31.5" stroke="#4a86c8" stroke-width="4" stroke-linecap="round"/></svg>
<div class="t" style="left:1667.20px;top:133.00px;font-size:15.26px;color:#262626;font-weight:normal;font-style:normal;transform:scaleX(0.9885);">Find &amp;</div>
<div class="t" style="left:1662.40px;top:153.00px;font-size:15.26px;color:#262626;font-weight:normal;font-style:normal;transform:scaleX(0.9263);">Select</div>
<svg class="a" style="left:1706px;top:156.5px;" width="9" height="6" viewBox="0 0 9 6"><path d="M1 1l3.5 4l3.5 -4" fill="none" stroke="#444" stroke-width="1.3"/></svg>
<svg class="a" style="left:1760px;top:100px;" width="14" height="14" viewBox="0 0 14 14"><circle cx="7" cy="6.5" r="6" fill="#ff8c00" opacity="0.95"/></svg>
<div class="t" style="left:1742.40px;top:133.00px;font-size:15.26px;color:#262626;font-weight:normal;font-style:normal;transform:scaleX(0.9935);">Add-ins</div>
<svg class="a" style="left:1835px;top:92px;" width="34" height="37" viewBox="0 0 34 37"><path d="M2 2h15l7 7v12M16 28H4a2 2 0 0 1-2-2V4" fill="none" stroke="#3875e0" stroke-width="1.6"/><path d="M7 18c3-1 6-4 6-10 0 3 2 6 6 7-4 0-8 1-12 3z" fill="none" stroke="#3875e0" stroke-width="1"/><g transform="rotate(-45 25 26)" fill="none" stroke="#3875e0" stroke-width="1.8"><rect x="14" y="22.5" width="12" height="7" rx="3.5"/><rect x="23" y="22.5" width="12" height="7" rx="3.5"/></g></svg>
<div class="t" style="left:1825.30px;top:133.00px;font-size:15.26px;color:#262626;font-weight:normal;font-style:normal;transform:scaleX(0.9239);">Create</div>
<div class="t" style="left:1828.20px;top:153.00px;font-size:15.26px;color:#262626;font-weight:normal;font-style:normal;transform:scaleX(0.8713);">a PDF</div>
<div class="a" style="left:0px;top:196px;width:1920px;height:54px;background:#e6e6e6;"></div>
<div class="a" style="left:6px;top:208px;width:127px;height:30px;background:#ffffff;box-sizing:border-box;border:1px solid #c6c6c6;"></div>
<div class="t" style="left:13.50px;top:216.00px;font-size:15.26px;color:#262626;font-weight:normal;font-style:normal;transform:scaleX(0.9624);">D4</div>
<svg class="a" style="left:116px;top:220px;" width="9" height="6" viewBox="0 0 9 6"><path d="M0.5 0.5h8L4.5 5z" fill="#666"/></svg>
<div class="a" style="left:150px;top:216px;width:3px;height:2.5px;background:#9a9a9a;"></div>
<div class="a" style="left:150px;top:221.5px;width:3px;height:2.5px;background:#9a9a9a;"></div>
<div class="a" style="left:150px;top:227px;width:3px;height:2.5px;background:#9a9a9a;"></div>
<div class="a" style="left:170px;top:208px;width:137px;height:30px;background:#ffffff;box-sizing:border-box;border:1px solid #c6c6c6;"></div>
<svg class="a" style="left:185px;top:217px;" width="16" height="14" viewBox="0 0 16 14"><path d="M1 1l13 12M14 1L1 13" stroke="#c0c0c0" stroke-width="1.6"/></svg>
<svg class="a" style="left:229px;top:216px;" width="19" height="15" viewBox="0 0 19 15"><path d="M1.5 8l5 5.5L17.5 1.5" fill="none" stroke="#c8c8c8" stroke-width="2"/></svg>
<div class="t" style="left:274.60px;top:216.00px;font-size:17.44px;color:#555;font-weight:normal;font-style:italic;transform:scaleX(1.0617);font-family:'Liberation Serif',serif;">fx</div>
<div class="a" style="left:310px;top:208px;width:1604px;height:30px;background:#ffffff;box-sizing:border-box;border:1px solid #c6c6c6;"></div>
<div class="t" style="left:324.40px;top:216.00px;font-size:15.26px;color:#262626;font-weight:normal;font-style:normal;transform:scaleX(1.0447);">2755476</div>
<svg class="a" style="left:1898px;top:219px;" width="11" height="8" viewBox="0 0 11 8"><path d="M1.2 1.5l4.3 4.3L9.8 1.5" fill="none" stroke="#6a6a6a" stroke-width="2.4"/></svg>
<div class="a" style="left:0px;top:250px;width:1483px;height:711px;background:#e6e6e6;"></div>
<div class="a" style="left:40px;top:279px;width:1417px;height:682px;background:#ffffff;"></div>
<div class="a" style="left:0px;top:250px;width:1457px;height:28px;background:#e6e6e6;"></div>
<div class="a" style="left:519px;top:250px;width:133px;height:28px;background:#d2d2d2;"></div>
<div class="a" style="left:0px;top:278px;width:1457px;height:1px;background:#9f9f9f;"></div>
<div class="a" style="left:519px;top:276.5px;width:133px;height:2.0px;background:#217346;"></div>
<svg class="a" style="left:15px;top:254px;" width="22" height="21" viewBox="0 0 22 21"><path d="M21 0.5V20.5H0.5z" fill="#b4b4b4"/></svg>
<div class="a" style="left:39px;top:250px;width:1px;height:28px;background:#c3c3c3;"></div>
<div class="a" style="left:208px;top:250px;width:1px;height:28px;background:#c3c3c3;"></div>
<div class="a" style="left:375px;top:250px;width:1px;height:28px;background:#c3c3c3;"></div>
<div class="a" style="left:519px;top:250px;width:1px;height:28px;background:#c3c3c3;"></div>
<div class="a" style="left:651px;top:250px;width:1px;height:28px;background:#c3c3c3;"></div>
<div class="a" style="left:795px;top:250px;width:1px;height:28px;background:#c3c3c3;"></div>
<div class="a" style="left:927px;top:250px;width:1px;height:28px;background:#c3c3c3;"></div>
<div class="a" style="left:1071px;top:250px;width:1px;height:28px;background:#c3c3c3;"></div>
<div class="a" style="left:1169px;top:250px;width:1px;height:28px;background:#c3c3c3;"></div>
<div class="a" style="left:1267px;top:250px;width:1px;height:28px;background:#c3c3c3;"></div>
<div class="a" style="left:1365px;top:250px;width:1px;height:28px;background:#c3c3c3;"></div>
<div class="a" style="left:39px;top:250px;width:1px;height:711px;background:#bcbcbc;"></div>
<div class="t" style="left:117.18px;top:255.00px;font-size:20.35px;color:#000000;font-weight:normal;font-style:normal;">A</div>
<div class="t" style="left:285.18px;top:255.00px;font-size:20.35px;color:#000000;font-weight:normal;font-style:normal;">B</div>
<div class="t" style="left:440.07px;top:255.00px;font-size:20.35px;color:#000000;font-weight:normal;font-style:normal;">C</div>
<div class="t" style="left:578.12px;top:255.00px;font-size:20.35px;color:#217346;font-weight:normal;font-style:normal;">D</div>
<div class="t" style="left:716.73px;top:255.00px;font-size:20.35px;color:#000000;font-weight:normal;font-style:normal;">E</div>
<div class="t" style="left:855.19px;top:255.00px;font-size:20.35px;color:#000000;font-weight:normal;font-style:normal;">F</div>
<div class="t" style="left:991.66px;top:255.00px;font-size:20.35px;color:#000000;font-weight:normal;font-style:normal;">G</div>
<div class="t" style="left:1113.27px;top:255.00px;font-size:20.35px;color:#000000;font-weight:normal;font-style:normal;">H</div>
<div class="t" style="left:1215.65px;top:255.00px;font-size:20.35px;color:#000000;font-weight:normal;font-style:normal;">I</div>
<div class="t" style="left:1311.41px;top:255.00px;font-size:20.35px;color:#000000;font-weight:normal;font-style:normal;">J</div>
<div class="t" style="left:1407.48px;top:255.00px;font-size:20.35px;color:#000000;font-weight:normal;font-style:normal;">K</div>
<div class="a" style="left:0px;top:279px;width:39px;height:682px;background:#e6e6e6;"></div>
<div class="a" style="left:0px;top:365px;width:39px;height:29px;background:#d2d2d2;"></div>
<div class="a" style="left:38px;top:365px;width:2px;height:29px;background:#217346;"></div>
<div class="a" style="left:0px;top:307px;width:39px;height:1px;background:#c6c6c6;"></div>
<div class="t" style="left:14.35px;top:284.00px;font-size:20.35px;color:#000000;font-weight:normal;font-style:normal;">1</div>
<div class="a" style="left:0px;top:336px;width:39px;height:1px;background:#c6c6c6;"></div>
<div class="t" style="left:14.35px;top:313.00px;font-size:20.35px;color:#000000;font-weight:normal;font-style:normal;">2</div>
<div class="a" style="left:0px;top:365px;width:39px;height:1px;background:#c6c6c6;"></div>
<div class="t" style="left:14.35px;top:342.00px;font-size:20.35px;color:#000000;font-weight:normal;font-style:normal;">3</div>
<div class="a" style="left:0px;top:394px;width:39px;height:1px;background:#c6c6c6;"></div>
<div class="t" style="left:14.35px;top:371.00px;font-size:20.35px;color:#217346;font-weight:normal;font-style:normal;">4</div>
<div class="a" style="left:0px;top:423px;width:39px;height:1px;background:#c6c6c6;"></div>
<div class="t" style="left:14.35px;top:400.00px;font-size:20.35px;color:#000000;font-weight:normal;font-style:normal;">5</div>
<div class="a" style="left:0px;top:452px;width:39px;height:1px;background:#c6c6c6;"></div>
<div class="t" style="left:14.35px;top:429.00px;font-size:20.35px;color:#000000;font-weight:normal;font-style:normal;">6</div>
<div class="a" style="left:0px;top:481px;width:39px;height:1px;background:#c6c6c6;"></div>
<div class="t" style="left:14.35px;top:458.00px;font-size:20.35px;color:#000000;font-weight:normal;font-style:normal;">7</div>
<div class="a" style="left:0px;top:510px;width:39px;height:1px;background:#c6c6c6;"></div>
<div class="t" style="left:14.35px;top:487.00px;font-size:20.35px;color:#000000;font-weight:normal;font-style:normal;">8</div>
<div class="a" style="left:0px;top:539px;width:39px;height:1px;background:#c6c6c6;"></div>
<div class="t" style="left:14.35px;top:516.00px;font-size:20.35px;color:#000000;font-weight:normal;font-style:normal;">9</div>
<div class="a" style="left:0px;top:568px;width:39px;height:1px;background:#c6c6c6;"></div>
<div class="t" style="left:8.71px;top:545.00px;font-size:20.35px;color:#000000;font-weight:normal;font-style:normal;">10</div>
<div class="a" style="left:0px;top:597px;width:39px;height:1px;background:#c6c6c6;"></div>
<div class="t" style="left:9.42px;top:574.00px;font-size:20.35px;color:#000000;font-weight:normal;font-style:normal;">11</div>
<div class="a" style="left:0px;top:626px;width:39px;height:1px;background:#c6c6c6;"></div>
<div class="t" style="left:8.71px;top:603.00px;font-size:20.35px;color:#000000;font-weight:normal;font-style:normal;">12</div>
<div class="a" style="left:0px;top:655px;width:39px;height:1px;background:#c6c6c6;"></div>
<div class="t" style="left:8.71px;top:632.00px;font-size:20.35px;color:#000000;font-weight:normal;font-style:normal;">13</div>
<div class="a" style="left:0px;top:684px;width:39px;height:1px;background:#c6c6c6;"></div>
<div class="t" style="left:8.71px;top:661.00px;font-size:20.35px;color:#000000;font-weight:normal;font-style:normal;">14</div>
<div class="a" style="left:0px;top:713px;width:39px;height:1px;background:#c6c6c6;"></div>
<div class="t" style="left:8.71px;top:690.00px;font-size:20.35px;color:#000000;font-weight:normal;font-style:normal;">15</div>
<div class="a" style="left:0px;top:742px;width:39px;height:1px;background:#c6c6c6;"></div>
<div class="t" style="left:8.71px;top:719.00px;font-size:20.35px;color:#000000;font-weight:normal;font-style:normal;">16</div>
<div class="a" style="left:0px;top:771px;width:39px;height:1px;background:#c6c6c6;"></div>
<div class="t" style="left:8.71px;top:748.00px;font-size:20.35px;color:#000000;font-weight:normal;font-style:normal;">17</div>
<div class="a" style="left:0px;top:800px;width:39px;height:1px;background:#c6c6c6;"></div>
<div class="t" style="left:8.71px;top:777.00px;font-size:20.35px;color:#000000;font-weight:normal;font-style:normal;">18</div>
<div class="a" style="left:0px;top:829px;width:39px;height:1px;background:#c6c6c6;"></div>
<div class="t" style="left:8.71px;top:806.00px;font-size:20.35px;color:#000000;font-weight:normal;font-style:normal;">19</div>
<div class="a" style="left:0px;top:858px;width:39px;height:1px;background:#c6c6c6;"></div>
<div class="t" style="left:8.71px;top:835.00px;font-size:20.35px;color:#000000;font-weight:normal;font-style:normal;">20</div>
<div class="a" style="left:0px;top:887px;width:39px;height:1px;background:#c6c6c6;"></div>
<div class="t" style="left:8.71px;top:864.00px;font-size:20.35px;color:#000000;font-weight:normal;font-style:normal;">21</div>
<div class="a" style="left:0px;top:916px;width:39px;height:1px;background:#c6c6c6;"></div>
<div class="t" style="left:8.71px;top:893.00px;font-size:20.35px;color:#000000;font-weight:normal;font-style:normal;">22</div>
<div class="a" style="left:0px;top:945px;width:39px;height:1px;background:#c6c6c6;"></div>
<div class="t" style="left:8.71px;top:922.00px;font-size:20.35px;color:#000000;font-weight:normal;font-style:normal;">23</div>
<div class="a" style="left:0px;top:974px;width:39px;height:1px;background:#c6c6c6;"></div>
<div class="t" style="left:8.71px;top:951.00px;font-size:20.35px;color:#000000;font-weight:normal;font-style:normal;">24</div>
<div class="a" style="left:40px;top:279px;width:1032px;height:86px;background:#35608f;"></div>
<div class="a" style="left:209px;top:336px;width:863px;height:1px;background:#a7bfde;"></div>
<div class="t" style="left:212.70px;top:284.00px;font-size:20.35px;color:#ffffff;font-weight:normal;font-style:normal;transform:scaleX(0.9681);">Column Labels</div>
<div class="a" style="left:354px;top:285px;width:21px;height:21px;background:linear-gradient(#fbfbfb,#e8e8e8);box-sizing:border-box;border:1px solid #c8c8c8;"></div>
<svg class="a" style="left:361.0px;top:293.5px;" width="8" height="5" viewBox="0 0 8 5"><path d="M0 0.5h7L3.5 4.5z" fill="#707070"/></svg>
<div class="a" style="left:187px;top:343px;width:21px;height:21px;background:linear-gradient(#fbfbfb,#e8e8e8);box-sizing:border-box;border:1px solid #c8c8c8;"></div>
<svg class="a" style="left:194.0px;top:351.5px;" width="8" height="5" viewBox="0 0 8 5"><path d="M0 0.5h7L3.5 4.5z" fill="#707070"/></svg>
<div class="t" style="left:329.00px;top:312.00px;font-size:20.35px;color:#ffffff;font-weight:normal;font-style:normal;transform:scaleX(0.9210);">2012</div>
<div class="t" style="left:604.70px;top:312.00px;font-size:20.35px;color:#ffffff;font-weight:normal;font-style:normal;transform:scaleX(0.9343);">2013</div>
<div class="t" style="left:880.60px;top:312.00px;font-size:20.35px;color:#ffffff;font-weight:normal;font-style:normal;transform:scaleX(0.9365);">2014</div>
<div class="t" style="left:43.75px;top:341.00px;font-size:20.35px;color:#ffffff;font-weight:normal;font-style:normal;transform:scaleX(0.9452);">Row Labels</div>
<div class="t" style="left:212.40px;top:341.00px;font-size:20.35px;color:#ffffff;font-weight:normal;font-style:normal;transform:scaleX(0.8944);">Sum of SALES</div>
<div class="t" style="left:379.70px;top:341.00px;font-size:20.35px;color:#ffffff;font-weight:normal;font-style:normal;transform:scaleX(0.8917);">Sum of SALES2</div>
<div class="t" style="left:523.30px;top:341.00px;font-size:20.35px;color:#ffffff;font-weight:normal;font-style:normal;transform:scaleX(0.8944);">Sum of SALES</div>
<div class="t" style="left:655.00px;top:341.00px;font-size:20.35px;color:#ffffff;font-weight:normal;font-style:normal;transform:scaleX(0.9033);">Sum of SALES2</div>
<div class="t" style="left:799.40px;top:341.00px;font-size:20.35px;color:#ffffff;font-weight:normal;font-style:normal;transform:scaleX(0.8930);">Sum of SALES</div>
<div class="t" style="left:931.60px;top:341.00px;font-size:20.35px;color:#ffffff;font-weight:normal;font-style:normal;transform:scaleX(0.8924);">Sum of SALES2</div>
<div class="t" style="left:43.60px;top:371.00px;font-size:20.35px;color:#000000;font-weight:normal;font-style:normal;transform:scaleX(0.9331);">Kalyani Sen</div>
<div class="t" style="left:285.50px;top:371.00px;font-size:20.35px;color:#000000;font-weight:normal;font-style:normal;transform:scaleX(0.9475);">26,37,266</div>
<div class="t" style="left:424.20px;top:371.00px;font-size:20.35px;color:#000000;font-weight:normal;font-style:normal;transform:scaleX(0.9530);">26,37,266</div>
<div class="t" style="left:561.10px;top:371.00px;font-size:20.35px;color:#000000;font-weight:normal;font-style:normal;transform:scaleX(0.9541);">27,55,476</div>
<div class="t" style="left:700.30px;top:371.00px;font-size:20.35px;color:#000000;font-weight:normal;font-style:normal;transform:scaleX(0.9541);">27,55,476</div>
<div class="t" style="left:837.30px;top:371.00px;font-size:20.35px;color:#000000;font-weight:normal;font-style:normal;transform:scaleX(0.9508);">26,75,496</div>
<div class="t" style="left:976.00px;top:371.00px;font-size:20.35px;color:#000000;font-weight:normal;font-style:normal;transform:scaleX(0.9541);">26,75,496</div>
<div class="t" style="left:43.60px;top:400.00px;font-size:20.35px;color:#000000;font-weight:normal;font-style:normal;transform:scaleX(1.0401);">Mahesh Mathur</div>
<div class="t" style="left:285.50px;top:400.00px;font-size:20.35px;color:#000000;font-weight:normal;font-style:normal;transform:scaleX(0.9475);">25,28,582</div>
<div class="t" style="left:424.20px;top:400.00px;font-size:20.35px;color:#000000;font-weight:normal;font-style:normal;transform:scaleX(0.9530);">25,28,582</div>
<div class="t" style="left:561.10px;top:400.00px;font-size:20.35px;color:#000000;font-weight:normal;font-style:normal;transform:scaleX(0.9541);">24,41,148</div>
<div class="t" style="left:700.30px;top:400.00px;font-size:20.35px;color:#000000;font-weight:normal;font-style:normal;transform:scaleX(0.9541);">24,41,148</div>
<div class="t" style="left:837.30px;top:400.00px;font-size:20.35px;color:#000000;font-weight:normal;font-style:normal;transform:scaleX(0.9508);">25,69,892</div>
<div class="t" style="left:976.00px;top:400.00px;font-size:20.35px;color:#000000;font-weight:normal;font-style:normal;transform:scaleX(0.9541);">25,69,892</div>
<div class="t" style="left:43.60px;top:429.00px;font-size:20.35px;color:#000000;font-weight:normal;font-style:normal;transform:scaleX(0.9149);">Sajal Singh</div>
<div class="t" style="left:285.50px;top:429.00px;font-size:20.35px;color:#000000;font-weight:normal;font-style:normal;transform:scaleX(0.9475);">25,86,618</div>
<div class="t" style="left:424.20px;top:429.00px;font-size:20.35px;color:#000000;font-weight:normal;font-style:normal;transform:scaleX(0.9530);">25,86,618</div>
<div class="t" style="left:561.10px;top:429.00px;font-size:20.35px;color:#000000;font-weight:normal;font-style:normal;transform:scaleX(0.9541);">28,68,538</div>
<div class="t" style="left:700.30px;top:429.00px;font-size:20.35px;color:#000000;font-weight:normal;font-style:normal;transform:scaleX(0.9541);">28,68,538</div>
<div class="t" style="left:837.30px;top:429.00px;font-size:20.35px;color:#000000;font-weight:normal;font-style:normal;transform:scaleX(0.9508);">27,38,357</div>
<div class="t" style="left:976.00px;top:429.00px;font-size:20.35px;color:#000000;font-weight:normal;font-style:normal;transform:scaleX(0.9541);">27,38,357</div>
<div class="t" style="left:43.60px;top:458.00px;font-size:20.35px;color:#000000;font-weight:normal;font-style:normal;transform:scaleX(0.9785);">Venkatesh Reddy</div>
<div class="t" style="left:285.50px;top:458.00px;font-size:20.35px;color:#000000;font-weight:normal;font-style:normal;transform:scaleX(0.9475);">26,93,231</div>
<div class="t" style="left:424.20px;top:458.00px;font-size:20.35px;color:#000000;font-weight:normal;font-style:normal;transform:scaleX(0.9530);">26,93,231</div>
<div class="t" style="left:561.10px;top:458.00px;font-size:20.35px;color:#000000;font-weight:normal;font-style:normal;transform:scaleX(0.9541);">29,87,445</div>
<div class="t" style="left:700.30px;top:458.00px;font-size:20.35px;color:#000000;font-weight:normal;font-style:normal;transform:scaleX(0.9541);">29,87,445</div>
<div class="t" style="left:837.30px;top:458.00px;font-size:20.35px;color:#000000;font-weight:normal;font-style:normal;transform:scaleX(0.9508);">27,22,702</div>
<div class="t" style="left:976.00px;top:458.00px;font-size:20.35px;color:#000000;font-weight:normal;font-style:normal;transform:scaleX(0.9541);">27,22,702</div>
<div class="a" style="left:40px;top:394px;width:1032px;height:1px;background:#dce6f1;"></div>
<div class="a" style="left:40px;top:423px;width:1032px;height:1px;background:#dce6f1;"></div>
<div class="a" style="left:40px;top:452px;width:1032px;height:1px;background:#dce6f1;"></div>
<div class="a" style="left:40px;top:480px;width:1032px;height:1px;background:#4f81bd;"></div>
<div class="a" style="left:40px;top:481px;width:1032px;height:1px;background:#dce6f1;"></div>
<div class="a" style="left:40px;top:482px;width:1032px;height:1px;background:#4f81bd;"></div>
<div class="t" style="left:43.60px;top:487.00px;font-size:20.35px;color:#000000;font-weight:bold;font-style:normal;transform:scaleX(0.9615);">Grand Total</div>
<div class="t" style="left:265.80px;top:487.00px;font-size:20.35px;color:#000000;font-weight:bold;font-style:normal;transform:scaleX(0.9810);">1,04,45,697</div>
<div class="t" style="left:405.00px;top:487.00px;font-size:20.35px;color:#000000;font-weight:bold;font-style:normal;transform:scaleX(0.9810);">1,04,45,697</div>
<div class="t" style="left:542.30px;top:487.00px;font-size:20.35px;color:#000000;font-weight:bold;font-style:normal;transform:scaleX(0.9782);">1,10,52,607</div>
<div class="t" style="left:681.50px;top:487.00px;font-size:20.35px;color:#000000;font-weight:bold;font-style:normal;transform:scaleX(0.9782);">1,10,52,607</div>
<div class="t" style="left:818.50px;top:487.00px;font-size:20.35px;color:#000000;font-weight:bold;font-style:normal;transform:scaleX(0.9754);">1,07,06,447</div>
<div class="t" style="left:957.70px;top:487.00px;font-size:20.35px;color:#000000;font-weight:bold;font-style:normal;transform:scaleX(0.9736);">1,07,06,447</div>
<div class="a" style="left:518px;top:365px;width:135px;height:30px;box-sizing:border-box;border:2px solid #217346;"></div>
<div class="a" style="left:649px;top:392px;width:6px;height:6px;background:#217346;box-sizing:border-box;border:1px solid #ffffff;"></div>
<div class="a" style="left:1456px;top:278px;width:1px;height:683px;background:#a6a6a6;"></div>
<div class="a" style="left:1460px;top:252px;width:19px;height:709px;background:#f0f0f0;"></div>
<div class="a" style="left:1460px;top:252px;width:19px;height:19px;background:#ffffff;box-sizing:border-box;border:1px solid #a0a0a0;"></div>
<svg class="a" style="left:1464px;top:258px;" width="11" height="7" viewBox="0 0 11 7"><path d="M0.5 6.5h10L5.5 0.5z" fill="#262626"/></svg>
<div class="a" style="left:1460px;top:271px;width:19px;height:63px;background:#ffffff;box-sizing:border-box;border:1.3px solid #9a9a9a;"></div>
<div class="a" style="left:1460px;top:943px;width:19px;height:19px;background:#ffffff;box-sizing:border-box;border:1px solid #a0a0a0;"></div>
<svg class="a" style="left:1464px;top:949px;" width="11" height="7" viewBox="0 0 11 7"><path d="M0.5 0.5h10L5.5 6.5z" fill="#262626"/></svg>
<div class="a" style="left:0px;top:961px;width:1483px;height:32px;background:#e6e6e6;"></div>
<div class="a" style="left:0px;top:961px;width:1457px;height:1px;background:#a6a6a6;"></div>
<svg class="a" style="left:28px;top:971px;" width="10" height="12" viewBox="0 0 10 12"><path d="M7 1L1.5 6 7 11z" fill="#c2c2c2"/></svg>
<svg class="a" style="left:60px;top:971px;" width="10" height="12" viewBox="0 0 10 12"><path d="M2 1l5.5 5L2 11z" fill="#c2c2c2"/></svg>
<div class="a" style="left:112px;top:965px;width:1px;height:24px;background:#9e9e9e;"></div>
<div class="t" style="left:127.40px;top:966.00px;font-size:18.46px;color:#444444;font-weight:normal;font-style:normal;transform:scaleX(0.9234);">Pivot Table</div>
<div class="a" style="left:226px;top:961px;width:142px;height:29px;background:#ffffff;"></div>
<div class="a" style="left:226px;top:961px;width:1px;height:29px;background:#9e9e9e;"></div>
<div class="a" style="left:367px;top:961px;width:1px;height:29px;background:#9e9e9e;"></div>
<div class="a" style="left:226px;top:987.5px;width:142px;height:2.5px;background:#217346;"></div>
<div class="t" style="left:238.75px;top:966.00px;font-size:18.46px;color:#217346;font-weight:bold;font-style:normal;transform:scaleX(0.9236);">Pivot Table (2)</div>
<div class="t" style="left:381.20px;top:966.00px;font-size:18.46px;color:#444444;font-weight:normal;font-style:normal;transform:scaleX(0.8975);">Source Data</div>
<div class="a" style="left:487px;top:965px;width:1px;height:24px;background:#9e9e9e;"></div>
<svg class="a" style="left:525px;top:967px;" width="22" height="22" viewBox="0 0 22 22"><circle cx="11" cy="11" r="9.5" fill="none" stroke="#6d6d6d" stroke-width="1.3"/><path d="M11 5.5v11M5.5 11h11" stroke="#6d6d6d" stroke-width="1.5"/></svg>
<div class="a" style="left:888px;top:970.5px;width:3px;height:3.0px;background:#a8a8a8;"></div>
<div class="a" style="left:888px;top:975.5px;width:3px;height:3.0px;background:#a8a8a8;"></div>
<div class="a" style="left:888px;top:980.5px;width:3px;height:3.0px;background:#a8a8a8;"></div>
<div class="a" style="left:908px;top:968px;width:549px;height:19px;background:#f0f0f0;"></div>
<div class="a" style="left:908px;top:968px;width:19px;height:19px;background:#ffffff;box-sizing:border-box;border:1px solid #a0a0a0;"></div>
<svg class="a" style="left:913px;top:972px;" width="8" height="11" viewBox="0 0 8 11"><path d="M6.5 0.5v10L0.5 5.5z" fill="#262626"/></svg>
<div class="a" style="left:926px;top:968px;width:460px;height:19px;background:#ffffff;box-sizing:border-box;border:1.3px solid #9a9a9a;"></div>
<div class="a" style="left:1438px;top:968px;width:19px;height:19px;background:#ffffff;box-sizing:border-box;border:1px solid #a0a0a0;"></div>
<svg class="a" style="left:1445px;top:972px;" width="8" height="11" viewBox="0 0 8 11"><path d="M0.5 0.5v10L6.5 5.5z" fill="#262626"/></svg>
<div class="a" style="left:0px;top:993px;width:1920px;height:27px;background:#f3f3f3;"></div>
<div class="a" style="left:0px;top:993px;width:1920px;height:1px;background:#d5d5d5;"></div>
<div class="t" style="left:14.60px;top:1001.00px;font-size:13.95px;color:#444444;font-weight:normal;font-style:normal;transform:scaleX(0.8679);">Ready</div>
<div class="a" style="left:1547px;top:994px;width:50px;height:26px;background:#c6c6c6;"></div>
<svg class="a" style="left:1563px;top:998px;" width="18" height="18" viewBox="0 0 18 18"><g fill="none" stroke="#666" stroke-width="1.3"><rect x="1" y="1" width="16" height="15.5"/><path d="M6.3 1v15.5M11.6 1v15.5M1 6.2h16M1 11.4h16"/></g></svg>
<svg class="a" style="left:1612px;top:998px;" width="19" height="18" viewBox="0 0 19 18"><rect x="1" y="1" width="17" height="16" fill="none" stroke="#666" stroke-width="1.3"/><rect x="4.5" y="3.5" width="10" height="11" fill="none" stroke="#666" stroke-width="1.1"/><path d="M6.5 6.5h6M6.5 9h6M6.5 11.5h6" stroke="#666" stroke-width="1"/></svg>
<svg class="a" style="left:1662px;top:998px;" width="19" height="18" viewBox="0 0 19 18"><path d="M1 1h17v16H1zM1 12h9V1M6 1v7" fill="none" stroke="#666" stroke-width="1.3"/></svg>
<div class="a" style="left:1704px;top:1006.5px;width:10px;height:1.2999999999999545px;background:#444;"></div>
<div class="a" style="left:1720px;top:1006.5px;width:125px;height:1.2999999999999545px;background:#444;"></div>
<div class="a" style="left:1782px;top:1000px;width:6px;height:14px;background:#444444;"></div>
<div class="a" style="left:1851px;top:1006.5px;width:10px;height:1.2999999999999545px;background:#444;"></div>
<div class="a" style="left:1855.4px;top:1002px;width:1.2999999999999545px;height:10px;background:#444;"></div>
<div class="t" style="left:1877.60px;top:1001.00px;font-size:13.81px;color:#444444;font-weight:normal;font-style:normal;transform:scaleX(0.8947);">110%</div>
<div class="a" style="left:1483px;top:246px;width:437px;height:747px;background:#e6e6e6;"></div>
<div class="a" style="left:1482px;top:246px;width:1px;height:745px;background:#c6c6c6;"></div>
<div class="t" style="left:1498.00px;top:266.00px;font-size:27.25px;color:#333333;font-weight:normal;font-style:normal;transform:scaleX(0.9334);">PivotTable Fields</div>
<svg class="a" style="left:1831px;top:272px;" width="19" height="11" viewBox="0 0 19 11"><path d="M1 1l8.5 8.5L18 1" fill="none" stroke="#444" stroke-width="1.4"/></svg>
<svg class="a" style="left:1884px;top:269px;" width="16" height="16" viewBox="0 0 16 16"><path d="M2 2l12 12M14 2L2 14" stroke="#333" stroke-width="1.2"/></svg>
<div class="t" style="left:1499.30px;top:316.00px;font-size:15.26px;color:#262626;font-weight:normal;font-style:normal;transform:scaleX(0.9915);">Choose fields to add to report:</div>
<div class="a" style="left:1849px;top:306px;width:56px;height:35px;background:#ffffff;box-sizing:border-box;border:1px solid #8f8f8f;"></div>
<svg class="a" style="left:1862px;top:314px;" width="18" height="18" viewBox="0 0 18 18"><g transform="translate(9 9)" fill="#9a9a9a"><circle r="6"/><rect x="-2.2" y="-8" width="4.4" height="4" rx="0.8" transform="rotate(0)"/><rect x="-2.2" y="-8" width="4.4" height="4" rx="0.8" transform="rotate(60)"/><rect x="-2.2" y="-8" width="4.4" height="4" rx="0.8" transform="rotate(120)"/><rect x="-2.2" y="-8" width="4.4" height="4" rx="0.8" transform="rotate(180)"/><rect x="-2.2" y="-8" width="4.4" height="4" rx="0.8" transform="rotate(240)"/><rect x="-2.2" y="-8" width="4.4" height="4" rx="0.8" transform="rotate(300)"/><circle r="2.6" fill="#fff"/></g></svg>
<svg class="a" style="left:1889px;top:319px;" width="11" height="7" viewBox="0 0 11 7"><path d="M0.5 0.5h9.5L5.2 5.5z" fill="#262626"/></svg>
<div class="a" style="left:1498px;top:357px;width:407px;height:30px;background:#ffffff;box-sizing:border-box;border:1px solid #c6c6c6;"></div>
<div class="t" style="left:1506.30px;top:363.00px;font-size:15.26px;color:#6d6d6d;font-weight:normal;font-style:normal;transform:scaleX(0.8971);">Search</div>
<svg class="a" style="left:1879px;top:361px;" width="22" height="22" viewBox="0 0 22 22"><circle cx="13" cy="8" r="6.3" fill="none" stroke="#444" stroke-width="1.3"/><path d="M8.5 12.5l-6.5 7" stroke="#444" stroke-width="1.5"/></svg>
<div class="a" style="left:1498px;top:407px;width:407px;height:215px;background:#ffffff;box-sizing:border-box;border:1px solid #adadad;"></div>
<div class="a" style="left:1503px;top:411px;width:16px;height:16px;background:#ffffff;box-sizing:border-box;border:1px solid #7a7a7a;"></div>
<div class="t" style="left:1526.00px;top:414.00px;font-size:16.28px;color:#262626;font-weight:normal;font-style:normal;transform:scaleX(0.8140);">CUSTOMER</div>
<div class="a" style="left:1503px;top:438px;width:16px;height:16px;background:#ffffff;box-sizing:border-box;border:1px solid #7a7a7a;"></div>
<div class="t" style="left:1526.00px;top:441.00px;font-size:16.28px;color:#262626;font-weight:normal;font-style:normal;transform:scaleX(0.8037);">PRODUCTS</div>
<div class="a" style="left:1503px;top:465px;width:16px;height:16px;background:#ffffff;box-sizing:border-box;border:1px solid #7a7a7a;"></div>
<div class="t" style="left:1526.00px;top:468.00px;font-size:16.28px;color:#262626;font-weight:normal;font-style:normal;transform:scaleX(0.8045);">SALES REGION</div>
<div class="a" style="left:1503px;top:492px;width:16px;height:16px;background:#ffffff;box-sizing:border-box;border:1px solid #7a7a7a;"></div>
<div class="t" style="left:1526.00px;top:495.00px;font-size:16.28px;color:#262626;font-weight:normal;font-style:normal;transform:scaleX(0.8177);">UNIQUE PURCHASES</div>
<div class="a" style="left:1503px;top:520px;width:16px;height:16px;background:#217346;"></div>
<svg class="a" style="left:1505px;top:523px;" width="12" height="10" viewBox="0 0 12 10"><path d="M1.5 5l3 3 6-6" fill="none" stroke="#fff" stroke-width="1.3"/></svg>
<div class="t" style="left:1526.00px;top:522.00px;font-size:16.28px;color:#262626;font-weight:bold;font-style:normal;transform:scaleX(0.8170);">SALES PERSON</div>
<div class="a" style="left:1503px;top:547px;width:16px;height:16px;background:#ffffff;box-sizing:border-box;border:1px solid #7a7a7a;"></div>
<div class="t" style="left:1526.00px;top:549.00px;font-size:16.28px;color:#262626;font-weight:normal;font-style:normal;transform:scaleX(0.8390);">ORDER DATE</div>
<div class="a" style="left:1503px;top:574px;width:16px;height:16px;background:#217346;"></div>
<svg class="a" style="left:1505px;top:577px;" width="12" height="10" viewBox="0 0 12 10"><path d="M1.5 5l3 3 6-6" fill="none" stroke="#fff" stroke-width="1.3"/></svg>
<div class="t" style="left:1526.00px;top:576.00px;font-size:16.28px;color:#262626;font-weight:bold;font-style:normal;transform:scaleX(0.7902);">SALES</div>
<div class="a" style="left:1503px;top:601px;width:16px;height:16px;background:#217346;"></div>
<svg class="a" style="left:1505px;top:604px;" width="12" height="10" viewBox="0 0 12 10"><path d="M1.5 5l3 3 6-6" fill="none" stroke="#fff" stroke-width="1.3"/></svg>
<div class="t" style="left:1526.00px;top:604.00px;font-size:16.28px;color:#262626;font-weight:bold;font-style:normal;transform:scaleX(0.8984);">FINANCIAL YEAR</div>
<div class="a" style="left:1884px;top:410px;width:19px;height:209px;background:#f0f0f0;"></div>
<div class="a" style="left:1884px;top:410px;width:19px;height:19px;background:#ffffff;box-sizing:border-box;border:1px solid #a0a0a0;"></div>
<svg class="a" style="left:1888px;top:416px;" width="11" height="7" viewBox="0 0 11 7"><path d="M0.5 6.5h10L5.5 0.5z" fill="#262626"/></svg>
<div class="a" style="left:1884px;top:429px;width:19px;height:102px;background:#ffffff;box-sizing:border-box;border:1.3px solid #9a9a9a;"></div>
<div class="a" style="left:1884px;top:600px;width:19px;height:19px;background:#ffffff;box-sizing:border-box;border:1px solid #a0a0a0;"></div>
<svg class="a" style="left:1888px;top:606px;" width="11" height="7" viewBox="0 0 11 7"><path d="M0.5 0.5h10L5.5 6.5z" fill="#262626"/></svg>
<div class="a" style="left:1500px;top:640px;width:409px;height:1px;border-top:1px dotted #b4b4b4;"></div>
<div class="t" style="left:1503.40px;top:649.00px;font-size:15.26px;color:#262626;font-weight:normal;font-style:normal;transform:scaleX(0.9776);">Drag fields between areas below:</div>
<svg class="a" style="left:1506px;top:690px;" width="16" height="15" viewBox="0 0 16 15"><path d="M0.5 0.5h15L10 6.5v8H6v-8z" fill="#7f7f7f"/></svg>
<div class="t" style="left:1530.30px;top:691.00px;font-size:15.26px;color:#262626;font-weight:normal;font-style:normal;transform:scaleX(0.9275);">Filters</div>
<svg class="a" style="left:1712px;top:691px;" width="12" height="12" viewBox="0 0 12 12"><rect x="0" y="0" width="3.5" height="11.5" fill="#7f7f7f"/><path d="M5 0v11.5M7.5 0v11.5M10 0v11.5" stroke="#7f7f7f" stroke-width="1"/></svg>
<div class="t" style="left:1734.00px;top:691.00px;font-size:15.26px;color:#262626;font-weight:normal;font-style:normal;transform:scaleX(0.9434);">Columns</div>
<div class="a" style="left:1502px;top:713px;width:194px;height:85px;background:#ffffff;"></div>
<div class="a" style="left:1706px;top:713px;width:200px;height:85px;background:#ffffff;"></div>
<div class="a" style="left:1703px;top:687px;width:1px;height:238px;background:#c6c6c6;"></div>
<div class="a" style="left:1502px;top:805px;width:404px;height:1px;background:#c6c6c6;"></div>
<div class="a" style="left:1707px;top:715px;width:198px;height:26px;background:#ffffff;box-sizing:border-box;border:1px solid #c6c6c6;"></div>
<div class="t" style="left:1716.20px;top:721.00px;font-size:15.26px;color:#262626;font-weight:normal;font-style:normal;transform:scaleX(0.8926);">FINANCIAL YEAR</div>
<svg class="a" style="left:1883px;top:725px;" width="11" height="6" viewBox="0 0 11 6"><path d="M0.5 0.5h10L5.5 5.5z" fill="#262626"/></svg>
<div class="a" style="left:1707px;top:744px;width:198px;height:25px;background:#ffffff;box-sizing:border-box;border:1px solid #c6c6c6;"></div>
<div class="t" style="left:1737.90px;top:749.00px;font-size:15.26px;color:#262626;font-weight:normal;font-style:normal;transform:scaleX(0.9395);">Values</div>
<svg class="a" style="left:1883px;top:754px;" width="11" height="6" viewBox="0 0 11 6"><path d="M0.5 0.5h10L5.5 5.5z" fill="#262626"/></svg>
<div class="t" style="left:1718.90px;top:748.00px;font-size:15.55px;color:#6d6d6d;font-weight:normal;font-style:normal;transform:scaleX(1.2756);">Σ</div>
<svg class="a" style="left:1507px;top:818px;" width="13" height="11" viewBox="0 0 13 11"><path d="M0.5 1h12M0.5 3.5h12M0.5 6h12M0.5 8.5h12" stroke="#8a8a8a" stroke-width="1.4"/></svg>
<div class="t" style="left:1530.30px;top:817.00px;font-size:15.26px;color:#262626;font-weight:normal;font-style:normal;transform:scaleX(0.8990);">Rows</div>
<div class="t" style="left:1712.40px;top:815.00px;font-size:15.26px;color:#7f7f7f;font-weight:normal;font-style:normal;transform:scaleX(1.2259);">Σ</div>
<div class="t" style="left:1734.00px;top:817.00px;font-size:15.26px;color:#262626;font-weight:normal;font-style:normal;transform:scaleX(0.9373);">Values</div>
<div class="a" style="left:1502px;top:839px;width:194px;height:86px;background:#ffffff;"></div>
<div class="a" style="left:1706px;top:839px;width:200px;height:86px;background:#ffffff;"></div>
<div class="a" style="left:1503px;top:841px;width:192px;height:26px;background:#ffffff;box-sizing:border-box;border:1px solid #c6c6c6;"></div>
<div class="t" style="left:1512.40px;top:847.00px;font-size:15.26px;color:#262626;font-weight:normal;font-style:normal;transform:scaleX(0.8397);">SALES PERSON</div>
<svg class="a" style="left:1673px;top:851px;" width="11" height="6" viewBox="0 0 11 6"><path d="M0.5 0.5h10L5.5 5.5z" fill="#262626"/></svg>
<div class="a" style="left:1707px;top:841px;width:198px;height:26px;background:#ffffff;box-sizing:border-box;border:1px solid #c6c6c6;"></div>
<div class="t" style="left:1716.20px;top:847.00px;font-size:15.26px;color:#262626;font-weight:normal;font-style:normal;transform:scaleX(0.8979);">Sum of SALES</div>
<svg class="a" style="left:1883px;top:851px;" width="11" height="6" viewBox="0 0 11 6"><path d="M0.5 0.5h10L5.5 5.5z" fill="#262626"/></svg>
<div class="a" style="left:1707px;top:869px;width:198px;height:26px;background:#ffffff;box-sizing:border-box;border:1px solid #c6c6c6;"></div>
<div class="t" style="left:1716.20px;top:875.00px;font-size:15.26px;color:#262626;font-weight:normal;font-style:normal;transform:scaleX(0.8996);">Sum of SALES2</div>
<svg class="a" style="left:1883px;top:879px;" width="11" height="6" viewBox="0 0 11 6"><path d="M0.5 0.5h10L5.5 5.5z" fill="#262626"/></svg>
<div class="a" style="left:1506px;top:957px;width:16px;height:16px;background:#ffffff;box-sizing:border-box;border:1px solid #7a7a7a;"></div>
<div class="t" style="left:1531.00px;top:958.00px;font-size:15.26px;color:#262626;font-weight:normal;font-style:normal;transform:scaleX(0.9697);">Defer Layout Update</div>
<div class="a" style="left:1843px;top:950px;width:63px;height:31px;background:#ffffff;box-sizing:border-box;border:1px solid #dadada;"></div>
<div class="t" style="left:1850.60px;top:958.00px;font-size:15.26px;color:#c0c0c0;font-weight:normal;font-style:normal;transform:scaleX(0.9691);">Update</div>
</body></html>
